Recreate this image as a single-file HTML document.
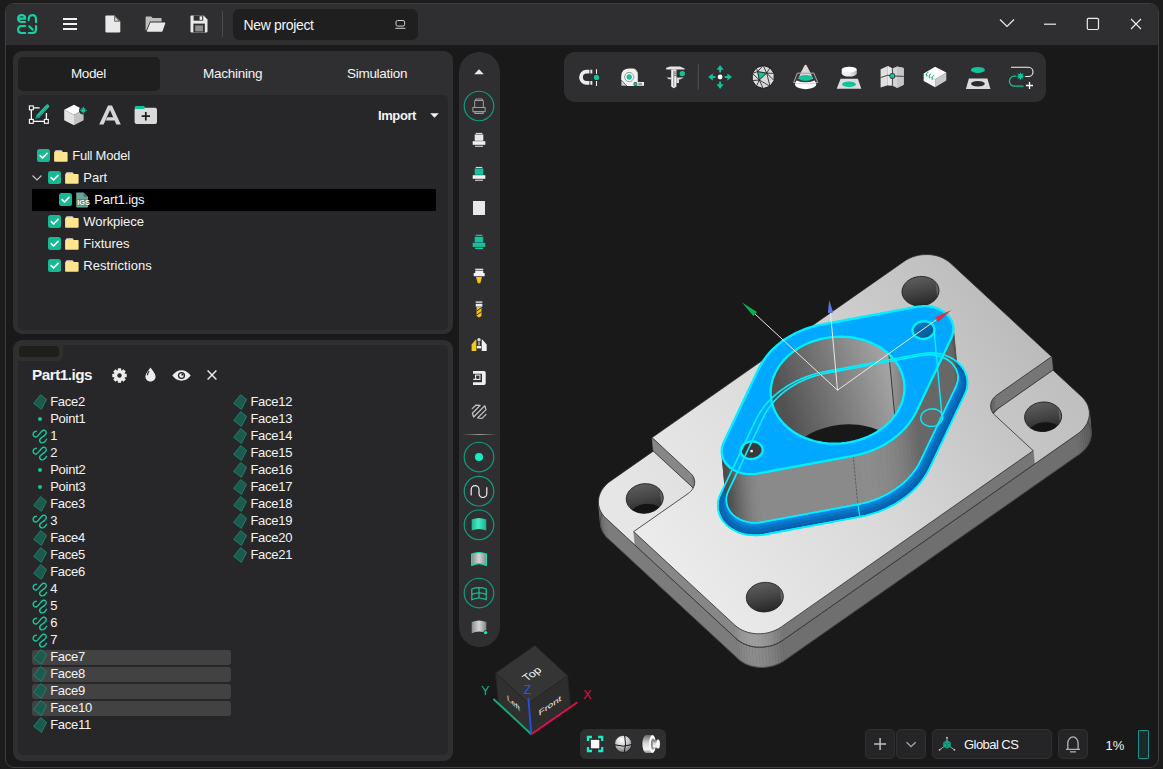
<!DOCTYPE html>
<html><head><meta charset="utf-8"><title>New project</title>
<style>
*{box-sizing:border-box;margin:0;padding:0}
html,body{width:1163px;height:769px;overflow:hidden;background:#1c1c1c;font-family:"Liberation Sans",sans-serif;color:#f2f2f2}
.abs{position:absolute}
#win{position:absolute;left:5px;top:3px;width:1154px;height:765px;border:1px solid #3e3e3e;border-radius:9px;background:#191919;overflow:hidden}
#title{position:absolute;left:0;top:0;width:1152px;height:41px;background:#2f2f31}
/* everything inside #root is positioned in page coordinates */
#root{position:absolute;left:0;top:0;width:1163px;height:769px}
.panel{position:absolute;background:#2f2f31;border-radius:9px}
.inner{position:absolute;background:#272729;border-radius:5px}
.t{position:absolute;white-space:nowrap;line-height:16px;height:16px;color:#f4f4f4}
.cb{position:absolute;width:13px;height:13px;border-radius:2.5px;background:#18b894}
.cb svg{position:absolute;left:0;top:0}
.fold{position:absolute;width:14px;height:12px}
.tb{position:absolute;background:#2f2f31}
svg{overflow:visible}
.li{position:absolute;font-size:13px;letter-spacing:-0.27px;line-height:16px;white-space:nowrap;color:#f4f4f4}
.hl{position:absolute;left:32px;width:199px;height:15px;border-radius:3px;background:#424243}
.btn{position:absolute;background:#252527;border:1px solid #303032;border-radius:5px}
</style></head><body>
<div id="win"><div id="title"></div></div>
<div id="root">
<!-- TITLEBAR -->
<!-- logo -->
<svg class="abs" style="left:17px;top:14px" width="20" height="20" viewBox="0 0 20 20" fill="none" stroke="#15d1a4" stroke-width="2.1" stroke-linecap="round" stroke-linejoin="round">
<path d="M1.2 4.6H8.2C8.2 2.5 6.8 1.1 4.7 1.1S1.1 2.5 1.1 4.6S2.5 8 4.7 8H8"/>
<path d="M11.6 6.3C11.6 2.9 12.6 1.1 15.3 1.1S19 2.9 19 5.2V8.2"/>
<path d="M8.2 12H4.7C2.5 12 1.1 13.4 1.1 15.5S2.5 19 4.7 19H8.2"/>
<path d="M19 12V15.5C19 17.6 17.6 19 15.5 19H11.8"/>
<path d="M12.2 12.4L15.8 15.6"/>
</svg>
<!-- hamburger -->
<div class="abs" style="left:63px;top:18px;width:14px;height:2px;background:#f2f2f2"></div>
<div class="abs" style="left:63px;top:23px;width:14px;height:2px;background:#f2f2f2"></div>
<div class="abs" style="left:63px;top:28px;width:14px;height:2px;background:#f2f2f2"></div>
<!-- new file -->
<svg class="abs" style="left:105px;top:15px" width="16" height="18" viewBox="0 0 16 18">
<path d="M1.2 0.5H9.5L15.3 6.3V16.6Q15.3 17.4 14.5 17.4H1.2Q0.4 17.4 0.4 16.6V1.3Q0.4 0.5 1.2 0.5Z" fill="#e9e9e9"/>
<path d="M9.4 0.5V6.4H15.3Z" fill="#2f2f31"/>
<path d="M10.1 2V5.7H13.8Z" fill="#dedede"/>
</svg>
<!-- open folder -->
<svg class="abs" style="left:145px;top:16px" width="21" height="16" viewBox="0 0 21 16">
<path d="M1.4 0.4H6.2L7.6 2H15.8Q16.6 2 16.6 2.8V5.5H5L1.2 14.5H0.6V1.2Q0.6 0.4 1.4 0.4Z" fill="#bdbdbd"/>
<path d="M5.4 6.4H19.8Q20.6 6.4 20.3 7.2L17.6 15Q17.4 15.7 16.6 15.7H2.4Q1.6 15.7 1.9 15Z" fill="#e9e9e9"/>
</svg>
<!-- save -->
<svg class="abs" style="left:190px;top:15px" width="18" height="18" viewBox="0 0 18 18">
<path d="M1.3 0.5H13.6L17.5 4.4V16.6Q17.5 17.4 16.7 17.4H1.3Q0.5 17.4 0.5 16.6V1.3Q0.5 0.5 1.3 0.5Z" fill="#e9e9e9"/>
<rect x="3.6" y="0.5" width="9.6" height="5.2" fill="#2f2f31"/>
<rect x="9.6" y="1.3" width="2.6" height="3.6" fill="#e9e9e9"/>
<rect x="3.4" y="8.6" width="11.4" height="8.8" fill="#2f2f31"/>
<rect x="5.2" y="10.4" width="7.8" height="6" fill="#8e8e8e"/>
</svg>
<div class="abs" style="left:222px;top:11px;width:1px;height:26px;background:#4c4c4e"></div>
<div class="abs" style="left:233px;top:9px;width:185px;height:31px;background:#1f1f1f;border-radius:6px"></div>
<div class="t" id="tproj" style="left:243.5px;top:17px;font-size:14px;letter-spacing:-0.35px">New project</div>
<svg class="abs" style="left:395px;top:20px" width="11" height="10" viewBox="0 0 11 10" fill="none" stroke="#d0d0d0" stroke-width="1">
<rect x="1" y="0.5" width="8.6" height="5.6" rx="1.6"/><path d="M0.3 8.3H10.4"/>
</svg>
<!-- window controls -->
<svg class="abs" style="left:990px;top:10px" width="165" height="28" viewBox="0 0 165 28" fill="none" stroke="#ececec" stroke-width="1.2">
<path d="M10 9.5L17 16.5L24 9.5"/>
<path d="M54 14.2H66"/>
<rect x="97.300" y="8.3" width="11.200" height="11.200" rx="1.2"/>
<path d="M141 9L151 19M151 9L141 19"/>
</svg>

<!-- LEFT PANELS -->
<div class="panel" style="left:13px;top:51px;width:440px;height:283px"></div>
<div class="abs" style="left:18px;top:57px;width:142px;height:34px;background:#1f1f1f;border-radius:5px"></div>
<div class="inner" style="left:18px;top:95px;width:430px;height:235px"></div>
<div class="t" id="tab1" style="left:71px;top:65.500px;font-size:13.5px;letter-spacing:-0.4px">Model</div>
<div class="t" id="tab2" style="left:203px;top:65.500px;font-size:13.5px;letter-spacing:-0.25px">Machining</div>
<div class="t" id="tab3" style="left:347px;top:65.500px;font-size:13.5px;letter-spacing:-0.29px">Simulation</div>
<svg class="abs" style="left:28px;top:104px" width="22" height="22" viewBox="0 0 22 22">
<path d="M3.350 3.900H11.600M3.350 3.900V17.400H18.400V9" fill="none" stroke="#fff" stroke-width="1.300"/>
<rect x="1.400" y="1.900" width="3.900" height="3.900" fill="#222" stroke="#fff" stroke-width="1.100"/>
<rect x="1.400" y="15.400" width="3.900" height="3.900" fill="#222" stroke="#fff" stroke-width="1.100"/>
<rect x="16.400" y="15.400" width="3.900" height="3.900" fill="#222" stroke="#fff" stroke-width="1.100"/>
<path d="M19.400 2.300L10.200 12" stroke="#13c39b" stroke-width="3.700" stroke-linecap="round" fill="none"/>
<path d="M8.600 10.400L11.900 13.500L7.300 15.100Z" fill="#0c9c7c"/>
<path d="M19 4L10.600 12.800" stroke="#0a8f72" stroke-width="0.900" fill="none"/>
</svg>
<svg class="abs" style="left:63px;top:104px" width="24" height="22" viewBox="0 0 24 22">
<path d="M11 0.700L20.600 5.800L11 10.800L1.200 5.800Z" fill="#fdfdfd"/>
<path d="M1.200 5.800L11 10.800V21.300L1.200 16.200Z" fill="#e2e2e2"/>
<path d="M20.600 5.800L11 10.800V21.300L20.600 16.200Z" fill="#c2c2c2"/>
<circle cx="20.300" cy="6.300" r="4.300" fill="#272729"/>
<path d="M20.300 2.800V9.800M16.800 6.300H23.800M18.400 4.400L22.200 8.200M22.200 4.400L18.400 8.200" stroke="#13c39b" stroke-width="1.100" fill="none"/>
</svg>
<svg class="abs" style="left:99px;top:105px" width="22" height="20" viewBox="0 0 22 20">
<path d="M9 0.600H13L21.800 19.400H17.300L15.600 15.600H6.800L8.300 12.300H14.200L11 5L4.600 19.400H0.200Z" fill="#d6d6d6"/>
</svg>
<svg class="abs" style="left:134px;top:105px" width="24" height="20" viewBox="0 0 24 20">
<rect x="0.600" y="2.700" width="22.400" height="16.400" rx="2" fill="#dadada"/>
<rect x="0.600" y="0.900" width="10.400" height="3.200" rx="1.600" fill="#13c39b"/>
<path d="M11.800 7V15.400M7.600 11.200H16" stroke="#1c1c1c" stroke-width="1.700" fill="none"/>
</svg>
<div class="t" id="timport" style="left:378px;top:107.500px;font-size:13px;font-weight:bold;letter-spacing:-0.4px">Import</div>
<svg class="abs" style="left:430px;top:113px" width="9" height="5" viewBox="0 0 9 5"><path d="M0.200 0.200H8.800L4.500 4.800Z" fill="#f2f2f2"/></svg>
<div class="abs" style="left:32px;top:189px;width:404px;height:22px;background:#000"></div>
<div class="cb" style="left:37px;top:149px"><svg width="13" height="13" viewBox="0 0 13 13"><path d="M3.200 6.600L5.600 9L10 4.400" fill="none" stroke="#fff" stroke-width="1.700" stroke-linecap="round" stroke-linejoin="round"/></svg></div>
<svg class="abs" style="left:54.3px;top:149.5px" width="14" height="12" viewBox="0 0 14 12"><rect x="0.600" y="0.200" width="8" height="3.400" rx="1.500" fill="#d9d9d9"/><path d="M0.900 2H6.800L8.200 2.100H12.800Q13.600 2.100 13.600 2.900V11Q13.600 11.800 12.800 11.800H0.900Q0.100 11.800 0.100 11V2.800Q0.100 2 0.900 2Z" fill="#fde58e"/></svg>
<div class="t tr" id="tr0" style="left:72.3px;top:147.5px;font-size:13px;letter-spacing:-0.25px">Full Model</div>
<div class="cb" style="left:48px;top:171px"><svg width="13" height="13" viewBox="0 0 13 13"><path d="M3.200 6.600L5.600 9L10 4.400" fill="none" stroke="#fff" stroke-width="1.700" stroke-linecap="round" stroke-linejoin="round"/></svg></div>
<svg class="abs" style="left:65.3px;top:171.5px" width="14" height="12" viewBox="0 0 14 12"><rect x="0.600" y="0.200" width="8" height="3.400" rx="1.500" fill="#d9d9d9"/><path d="M0.900 2H6.800L8.200 2.100H12.800Q13.600 2.100 13.600 2.900V11Q13.600 11.800 12.800 11.800H0.900Q0.100 11.800 0.100 11V2.800Q0.100 2 0.900 2Z" fill="#fde58e"/></svg>
<div class="t tr" id="tr1" style="left:83.3px;top:169.5px;font-size:13px">Part</div>
<div class="cb" style="left:59px;top:193px"><svg width="13" height="13" viewBox="0 0 13 13"><path d="M3.200 6.600L5.600 9L10 4.400" fill="none" stroke="#fff" stroke-width="1.700" stroke-linecap="round" stroke-linejoin="round"/></svg></div>
<svg class="abs" style="left:76px;top:192.2px" width="15" height="16" viewBox="0 0 15 16"><path d="M1 0.400H7.600L12 4.800V14.800Q12 15.600 11.200 15.600H1Q0.200 15.600 0.200 14.800V1.200Q0.200 0.400 1 0.400Z" fill="#6aa596"/><path d="M7.600 0.400V4.800H12Z" fill="#3f7567"/><rect x="0.200" y="7" width="11.800" height="6.800" fill="#3d6f62" opacity="0.550"/><text x="1.200" y="13.300" font-family="Liberation Sans,sans-serif" font-size="7.800" font-weight="bold" fill="#fff" textLength="12.600" lengthAdjust="spacingAndGlyphs">IGS</text></svg>
<div class="t tr" id="tr2" style="left:94.3px;top:191.5px;font-size:13px;letter-spacing:-0.13px">Part1.igs</div>
<div class="cb" style="left:48px;top:215px"><svg width="13" height="13" viewBox="0 0 13 13"><path d="M3.200 6.600L5.600 9L10 4.400" fill="none" stroke="#fff" stroke-width="1.700" stroke-linecap="round" stroke-linejoin="round"/></svg></div>
<svg class="abs" style="left:65.3px;top:215.5px" width="14" height="12" viewBox="0 0 14 12"><rect x="0.600" y="0.200" width="8" height="3.400" rx="1.500" fill="#d9d9d9"/><path d="M0.900 2H6.800L8.200 2.100H12.800Q13.600 2.100 13.600 2.900V11Q13.600 11.800 12.800 11.800H0.900Q0.100 11.800 0.100 11V2.800Q0.100 2 0.900 2Z" fill="#fde58e"/></svg>
<div class="t tr" id="tr3" style="left:83.3px;top:213.5px;font-size:13px;letter-spacing:-0.07px">Workpiece</div>
<div class="cb" style="left:48px;top:237px"><svg width="13" height="13" viewBox="0 0 13 13"><path d="M3.200 6.600L5.600 9L10 4.400" fill="none" stroke="#fff" stroke-width="1.700" stroke-linecap="round" stroke-linejoin="round"/></svg></div>
<svg class="abs" style="left:65.3px;top:237.5px" width="14" height="12" viewBox="0 0 14 12"><rect x="0.600" y="0.200" width="8" height="3.400" rx="1.500" fill="#d9d9d9"/><path d="M0.900 2H6.800L8.200 2.100H12.800Q13.600 2.100 13.600 2.900V11Q13.600 11.800 12.800 11.800H0.900Q0.100 11.800 0.100 11V2.800Q0.100 2 0.900 2Z" fill="#fde58e"/></svg>
<div class="t tr" id="tr4" style="left:83.3px;top:235.5px;font-size:13px">Fixtures</div>
<div class="cb" style="left:48px;top:259px"><svg width="13" height="13" viewBox="0 0 13 13"><path d="M3.200 6.600L5.600 9L10 4.400" fill="none" stroke="#fff" stroke-width="1.700" stroke-linecap="round" stroke-linejoin="round"/></svg></div>
<svg class="abs" style="left:65.3px;top:259.5px" width="14" height="12" viewBox="0 0 14 12"><rect x="0.600" y="0.200" width="8" height="3.400" rx="1.500" fill="#d9d9d9"/><path d="M0.900 2H6.800L8.200 2.100H12.800Q13.600 2.100 13.600 2.900V11Q13.600 11.800 12.800 11.800H0.900Q0.100 11.800 0.100 11V2.800Q0.100 2 0.900 2Z" fill="#fde58e"/></svg>
<div class="t tr" id="tr5" style="left:83.3px;top:257.5px;font-size:13px;letter-spacing:0.05px">Restrictions</div>
<svg class="abs" style="left:32px;top:175px" width="10" height="6" viewBox="0 0 10 6"><path d="M0.500 0.500L5 5L9.500 0.500" fill="none" stroke="#c4c4c4" stroke-width="1.200"/></svg>
<div class="panel" style="left:13px;top:340px;width:440px;height:421px"></div>
<div class="inner" style="left:18px;top:345px;width:430px;height:410px"></div>
<div class="abs" style="left:18px;top:345px;width:45px;height:16px;background:#2f2f31;border-radius:4px 0 5px 0"></div>
<div class="abs" style="left:19px;top:346px;width:40px;height:10.800px;background:#1e1e1a;border-radius:3.500px"></div>
<div class="t" id="thead" style="left:32px;top:367px;font-size:15.3px;font-weight:bold;letter-spacing:-0.5px">Part1.igs</div>
<svg class="abs" style="left:111.700px;top:367.700px" width="15" height="15" viewBox="-7.500 -7.500 15 15"><g fill="#ededed"><circle r="5.500"/><rect x="-1.700" y="-7.200" width="3.400" height="3.400" rx="0.400" transform="rotate(0)"/><rect x="-1.700" y="-7.200" width="3.400" height="3.400" rx="0.400" transform="rotate(45)"/><rect x="-1.700" y="-7.200" width="3.400" height="3.400" rx="0.400" transform="rotate(90)"/><rect x="-1.700" y="-7.200" width="3.400" height="3.400" rx="0.400" transform="rotate(135)"/><rect x="-1.700" y="-7.200" width="3.400" height="3.400" rx="0.400" transform="rotate(180)"/><rect x="-1.700" y="-7.200" width="3.400" height="3.400" rx="0.400" transform="rotate(225)"/><rect x="-1.700" y="-7.200" width="3.400" height="3.400" rx="0.400" transform="rotate(270)"/><rect x="-1.700" y="-7.200" width="3.400" height="3.400" rx="0.400" transform="rotate(315)"/></g><circle r="2.200" fill="#272729"/></svg>
<svg class="abs" style="left:145px;top:367.300px" width="11" height="15" viewBox="0 0 11 15"><path d="M5.500 0.400C7.400 3.400 10.600 6.400 10.600 9.400C10.600 12.200 8.400 14.400 5.500 14.400S0.400 12.200 0.400 9.400C0.400 6.400 3.600 3.400 5.500 0.400Z" fill="#ededed"/><path d="M2.400 8.200Q2.700 5.800 4.100 4" stroke="#272729" stroke-width="1.200" fill="none"/></svg>
<svg class="abs" style="left:171.800px;top:369.500px" width="19" height="11" viewBox="0 0 19 11"><path d="M0.300 5.500Q4.400 0.300 9.500 0.300T18.700 5.500Q14.600 10.700 9.500 10.700T0.300 5.500Z" fill="#ededed"/><circle cx="9.500" cy="5.500" r="3.600" fill="#272729"/><circle cx="9.500" cy="5.500" r="2.300" fill="#ededed"/><path d="M9.500 5.500V3.300A2.200 2.200 0 0 1 11.700 5.500Z" fill="#272729"/></svg>
<svg class="abs" style="left:207px;top:370px" width="10" height="10" viewBox="0 0 10 10"><path d="M0.600 0.600L9.400 9.400M9.400 0.600L0.600 9.400" stroke="#ededed" stroke-width="1.400"/></svg>
<div class="hl" style="top:650px"></div>
<div class="hl" style="top:667px"></div>
<div class="hl" style="top:684px"></div>
<div class="hl" style="top:701px"></div>
<svg class="abs" style="left:33.2px;top:393.5px" width="14" height="16" viewBox="0 0 14 16"><path d="M7.600 0.600L13.600 5.400L8.400 15.400L0.600 9.400Z" fill="#1d5a4e" stroke="#1f8a72" stroke-width="0.800"/></svg>
<div class="li c1" style="left:50.2px;top:393.5px">Face2</div>
<div class="abs" style="left:37.8px;top:416.5px;width:4px;height:4px;border-radius:2px;background:#13c39b"></div>
<div class="li c1" style="left:50.2px;top:410.5px">Point1</div>
<svg class="abs" style="left:32px;top:427.5px" width="15" height="16" viewBox="0 0 15 16"><path d="M4.3 3.200C2 3.400 0.800 5.200 1.200 6.800C1.600 8.600 3.200 9.400 4.600 8.800C7 7.800 8.600 3 11.200 2.300C13 1.900 14.400 3 14.200 4.800C14 6.800 12 8 9.800 9.400C8 10.600 7.200 12 7.800 13.400C8.400 14.800 10 15.200 11.400 14.600C13 13.900 14 12.600 14.600 11.300" fill="none" stroke="#13c99f" stroke-width="1.400" stroke-linecap="round"/></svg>
<div class="li c1" style="left:50.2px;top:427.5px">1</div>
<svg class="abs" style="left:32px;top:444.5px" width="15" height="16" viewBox="0 0 15 16"><path d="M4.3 3.200C2 3.400 0.800 5.200 1.200 6.800C1.600 8.600 3.200 9.400 4.600 8.800C7 7.800 8.600 3 11.200 2.300C13 1.900 14.400 3 14.200 4.800C14 6.800 12 8 9.800 9.400C8 10.600 7.200 12 7.800 13.400C8.400 14.800 10 15.200 11.400 14.600C13 13.900 14 12.600 14.600 11.300" fill="none" stroke="#13c99f" stroke-width="1.400" stroke-linecap="round"/></svg>
<div class="li c1" style="left:50.2px;top:444.5px">2</div>
<div class="abs" style="left:37.8px;top:467.5px;width:4px;height:4px;border-radius:2px;background:#13c39b"></div>
<div class="li c1" style="left:50.2px;top:461.5px">Point2</div>
<div class="abs" style="left:37.8px;top:484.5px;width:4px;height:4px;border-radius:2px;background:#13c39b"></div>
<div class="li c1" style="left:50.2px;top:478.5px">Point3</div>
<svg class="abs" style="left:33.2px;top:495.5px" width="14" height="16" viewBox="0 0 14 16"><path d="M7.600 0.600L13.600 5.400L8.400 15.400L0.600 9.400Z" fill="#1d5a4e" stroke="#1f8a72" stroke-width="0.800"/></svg>
<div class="li c1" style="left:50.2px;top:495.5px">Face3</div>
<svg class="abs" style="left:32px;top:512.5px" width="15" height="16" viewBox="0 0 15 16"><path d="M4.3 3.200C2 3.400 0.800 5.200 1.200 6.800C1.600 8.600 3.200 9.400 4.600 8.800C7 7.800 8.600 3 11.200 2.300C13 1.900 14.400 3 14.200 4.800C14 6.800 12 8 9.800 9.400C8 10.600 7.200 12 7.800 13.400C8.400 14.800 10 15.200 11.400 14.600C13 13.900 14 12.600 14.600 11.300" fill="none" stroke="#13c99f" stroke-width="1.400" stroke-linecap="round"/></svg>
<div class="li c1" style="left:50.2px;top:512.5px">3</div>
<svg class="abs" style="left:33.2px;top:529.5px" width="14" height="16" viewBox="0 0 14 16"><path d="M7.600 0.600L13.600 5.400L8.400 15.400L0.600 9.400Z" fill="#1d5a4e" stroke="#1f8a72" stroke-width="0.800"/></svg>
<div class="li c1" style="left:50.2px;top:529.5px">Face4</div>
<svg class="abs" style="left:33.2px;top:546.5px" width="14" height="16" viewBox="0 0 14 16"><path d="M7.600 0.600L13.600 5.400L8.400 15.400L0.600 9.400Z" fill="#1d5a4e" stroke="#1f8a72" stroke-width="0.800"/></svg>
<div class="li c1" style="left:50.2px;top:546.5px">Face5</div>
<svg class="abs" style="left:33.2px;top:563.5px" width="14" height="16" viewBox="0 0 14 16"><path d="M7.600 0.600L13.600 5.400L8.400 15.400L0.600 9.400Z" fill="#1d5a4e" stroke="#1f8a72" stroke-width="0.800"/></svg>
<div class="li c1" style="left:50.2px;top:563.5px">Face6</div>
<svg class="abs" style="left:32px;top:580.5px" width="15" height="16" viewBox="0 0 15 16"><path d="M4.3 3.200C2 3.400 0.800 5.200 1.200 6.800C1.600 8.600 3.200 9.400 4.600 8.800C7 7.800 8.600 3 11.200 2.300C13 1.900 14.400 3 14.200 4.800C14 6.800 12 8 9.800 9.400C8 10.600 7.200 12 7.800 13.400C8.400 14.800 10 15.200 11.400 14.600C13 13.900 14 12.600 14.600 11.300" fill="none" stroke="#13c99f" stroke-width="1.400" stroke-linecap="round"/></svg>
<div class="li c1" style="left:50.2px;top:580.5px">4</div>
<svg class="abs" style="left:32px;top:597.5px" width="15" height="16" viewBox="0 0 15 16"><path d="M4.3 3.200C2 3.400 0.800 5.200 1.200 6.800C1.600 8.600 3.200 9.400 4.600 8.800C7 7.800 8.600 3 11.200 2.300C13 1.900 14.400 3 14.200 4.800C14 6.800 12 8 9.800 9.400C8 10.600 7.200 12 7.800 13.400C8.400 14.800 10 15.200 11.400 14.600C13 13.900 14 12.600 14.600 11.300" fill="none" stroke="#13c99f" stroke-width="1.400" stroke-linecap="round"/></svg>
<div class="li c1" style="left:50.2px;top:597.5px">5</div>
<svg class="abs" style="left:32px;top:614.5px" width="15" height="16" viewBox="0 0 15 16"><path d="M4.3 3.200C2 3.400 0.800 5.200 1.200 6.800C1.600 8.600 3.200 9.400 4.600 8.800C7 7.800 8.600 3 11.200 2.300C13 1.900 14.400 3 14.200 4.800C14 6.800 12 8 9.800 9.400C8 10.600 7.200 12 7.800 13.400C8.400 14.800 10 15.200 11.400 14.600C13 13.900 14 12.600 14.600 11.300" fill="none" stroke="#13c99f" stroke-width="1.400" stroke-linecap="round"/></svg>
<div class="li c1" style="left:50.2px;top:614.5px">6</div>
<svg class="abs" style="left:32px;top:631.5px" width="15" height="16" viewBox="0 0 15 16"><path d="M4.3 3.200C2 3.400 0.800 5.200 1.200 6.800C1.600 8.600 3.200 9.400 4.600 8.800C7 7.800 8.600 3 11.200 2.300C13 1.900 14.400 3 14.200 4.800C14 6.800 12 8 9.800 9.400C8 10.600 7.200 12 7.800 13.400C8.400 14.800 10 15.200 11.400 14.600C13 13.900 14 12.600 14.600 11.300" fill="none" stroke="#13c99f" stroke-width="1.400" stroke-linecap="round"/></svg>
<div class="li c1" style="left:50.2px;top:631.5px">7</div>
<svg class="abs" style="left:33.2px;top:648.5px" width="14" height="16" viewBox="0 0 14 16"><path d="M7.600 0.600L13.600 5.400L8.400 15.400L0.600 9.400Z" fill="#1d5a4e" stroke="#1f8a72" stroke-width="0.800"/></svg>
<div class="li c1" style="left:50.2px;top:648.5px">Face7</div>
<svg class="abs" style="left:33.2px;top:665.5px" width="14" height="16" viewBox="0 0 14 16"><path d="M7.600 0.600L13.600 5.400L8.400 15.400L0.600 9.400Z" fill="#1d5a4e" stroke="#1f8a72" stroke-width="0.800"/></svg>
<div class="li c1" style="left:50.2px;top:665.5px">Face8</div>
<svg class="abs" style="left:33.2px;top:682.5px" width="14" height="16" viewBox="0 0 14 16"><path d="M7.600 0.600L13.600 5.400L8.400 15.400L0.600 9.400Z" fill="#1d5a4e" stroke="#1f8a72" stroke-width="0.800"/></svg>
<div class="li c1" style="left:50.2px;top:682.5px">Face9</div>
<svg class="abs" style="left:33.2px;top:699.5px" width="14" height="16" viewBox="0 0 14 16"><path d="M7.600 0.600L13.600 5.400L8.400 15.400L0.600 9.400Z" fill="#1d5a4e" stroke="#1f8a72" stroke-width="0.800"/></svg>
<div class="li c1" style="left:50.2px;top:699.5px">Face10</div>
<svg class="abs" style="left:33.2px;top:716.5px" width="14" height="16" viewBox="0 0 14 16"><path d="M7.600 0.600L13.600 5.400L8.400 15.400L0.600 9.400Z" fill="#1d5a4e" stroke="#1f8a72" stroke-width="0.800"/></svg>
<div class="li c1" style="left:50.2px;top:716.5px">Face11</div>
<svg class="abs" style="left:233.4px;top:393.5px" width="14" height="16" viewBox="0 0 14 16"><path d="M7.600 0.600L13.600 5.400L8.400 15.400L0.600 9.400Z" fill="#1d5a4e" stroke="#1f8a72" stroke-width="0.800"/></svg>
<div class="li c2" style="left:250.4px;top:393.5px">Face12</div>
<svg class="abs" style="left:233.4px;top:410.5px" width="14" height="16" viewBox="0 0 14 16"><path d="M7.600 0.600L13.600 5.400L8.400 15.400L0.600 9.400Z" fill="#1d5a4e" stroke="#1f8a72" stroke-width="0.800"/></svg>
<div class="li c2" style="left:250.4px;top:410.5px">Face13</div>
<svg class="abs" style="left:233.4px;top:427.5px" width="14" height="16" viewBox="0 0 14 16"><path d="M7.600 0.600L13.600 5.400L8.400 15.400L0.600 9.400Z" fill="#1d5a4e" stroke="#1f8a72" stroke-width="0.800"/></svg>
<div class="li c2" style="left:250.4px;top:427.5px">Face14</div>
<svg class="abs" style="left:233.4px;top:444.5px" width="14" height="16" viewBox="0 0 14 16"><path d="M7.600 0.600L13.600 5.400L8.400 15.400L0.600 9.400Z" fill="#1d5a4e" stroke="#1f8a72" stroke-width="0.800"/></svg>
<div class="li c2" style="left:250.4px;top:444.5px">Face15</div>
<svg class="abs" style="left:233.4px;top:461.5px" width="14" height="16" viewBox="0 0 14 16"><path d="M7.600 0.600L13.600 5.400L8.400 15.400L0.600 9.400Z" fill="#1d5a4e" stroke="#1f8a72" stroke-width="0.800"/></svg>
<div class="li c2" style="left:250.4px;top:461.5px">Face16</div>
<svg class="abs" style="left:233.4px;top:478.5px" width="14" height="16" viewBox="0 0 14 16"><path d="M7.600 0.600L13.600 5.400L8.400 15.400L0.600 9.400Z" fill="#1d5a4e" stroke="#1f8a72" stroke-width="0.800"/></svg>
<div class="li c2" style="left:250.4px;top:478.5px">Face17</div>
<svg class="abs" style="left:233.4px;top:495.5px" width="14" height="16" viewBox="0 0 14 16"><path d="M7.600 0.600L13.600 5.400L8.400 15.400L0.600 9.400Z" fill="#1d5a4e" stroke="#1f8a72" stroke-width="0.800"/></svg>
<div class="li c2" style="left:250.4px;top:495.5px">Face18</div>
<svg class="abs" style="left:233.4px;top:512.5px" width="14" height="16" viewBox="0 0 14 16"><path d="M7.600 0.600L13.600 5.400L8.400 15.400L0.600 9.400Z" fill="#1d5a4e" stroke="#1f8a72" stroke-width="0.800"/></svg>
<div class="li c2" style="left:250.4px;top:512.5px">Face19</div>
<svg class="abs" style="left:233.4px;top:529.5px" width="14" height="16" viewBox="0 0 14 16"><path d="M7.600 0.600L13.600 5.400L8.400 15.400L0.600 9.400Z" fill="#1d5a4e" stroke="#1f8a72" stroke-width="0.800"/></svg>
<div class="li c2" style="left:250.4px;top:529.5px">Face20</div>
<svg class="abs" style="left:233.4px;top:546.5px" width="14" height="16" viewBox="0 0 14 16"><path d="M7.600 0.600L13.600 5.400L8.400 15.400L0.600 9.400Z" fill="#1d5a4e" stroke="#1f8a72" stroke-width="0.800"/></svg>
<div class="li c2" style="left:250.4px;top:546.5px">Face21</div>
<!-- TOOLBARS -->
<div class="tb" style="left:459px;top:52px;width:40.500px;height:594.500px;border-radius:20.250px"></div>
<div class="tb" style="left:563.500px;top:51.500px;width:482.500px;height:50.500px;border-radius:11px"></div>
<div class="tb" style="left:580px;top:729px;width:86px;height:30px;border-radius:6px"></div>
<svg class="abs" style="left:459px;top:52px" width="41" height="595" viewBox="459 52 41 595">
<path d="M474.200 74.200L479 69.200L483.800 74.200Z" fill="#e8e8e8"/>
<circle cx="479" cy="106" r="14.800" fill="none" stroke="#0e9f80" stroke-width="1.150"/>
<g fill="none" stroke="#a0a0a0" stroke-width="1"><path d="M475.700 99H482.300V100.500H475.700Z"/><path d="M474.700 100.500H483.300V107.500H474.700Z"/><rect x="472.900" y="107.500" width="12.200" height="4.200"/><rect x="474.900" y="111.700" width="8.200" height="1.800"/></g>
<rect x="475.700" y="132.9" width="6.600" height="1.100" fill="#d8d8d8"/>
<rect x="474.700" y="134.5" width="8.600" height="6.300" fill="#e8e8e8"/>
<rect x="472.700" y="141.2" width="12.600" height="3.600" fill="#f0f0f0"/>
<rect x="475" y="145.7" width="8" height="1.100" fill="#d8d8d8"/>
<rect x="475.700" y="166.9" width="6.600" height="1.100" fill="#d8d8d8"/>
<rect x="474.700" y="168.5" width="8.600" height="6.300" fill="#13c39b"/>
<rect x="472.700" y="175.2" width="12.600" height="3.600" fill="#f0f0f0"/>
<rect x="475" y="179.7" width="8" height="1.100" fill="#d8d8d8"/>
<rect x="473" y="201" width="12" height="14" fill="#e8e8e8"/>
<rect x="475.700" y="234.700" width="6.600" height="1.300" fill="#13c39b"/>
<rect x="474.700" y="236.800" width="8.600" height="5.700" fill="#13c39b"/>
<rect x="472.700" y="242.900" width="12.600" height="4" fill="#13c39b"/>
<rect x="475" y="247.700" width="8" height="1.400" fill="#13c39b"/>
<rect x="475.200" y="268.700" width="8" height="1.400" fill="#e0e0e0"/>
<rect x="475.200" y="270.700" width="8" height="2.400" fill="#f2f2f2"/>
<rect x="473.700" y="273" width="11" height="3.200" rx="0.600" fill="#f2f2f2"/>
<path d="M476 277H482L480.300 283.200H477.800Z" fill="#f5c518"/>
<rect x="475.700" y="301.400" width="6.700" height="1.400" fill="#e0e0e0"/>
<rect x="475.700" y="303.800" width="6.700" height="2.800" fill="#f2f2f2"/>
<path d="M476.600 307H481.500V316L479 317.500L476.600 316Z" fill="#f5c518"/>
<path d="M476.600 311L481.500 307.600M476.600 315L481.500 311.600" stroke="#2f2f31" stroke-width="1" fill="none"/>
<path d="M471.600 351V344.500L475.500 339.800H476.300V351Z" fill="#f5c518"/>
<path d="M481.700 339.800H482.500L486.700 344.500V351H481.700Z" fill="#f0f0f0"/>
<circle cx="479" cy="339.800" r="1.700" fill="#dcdcdc"/>
<rect x="476.800" y="346" width="4.300" height="2.400" fill="#f0f0f0"/>
<rect x="478.300" y="342" width="1.400" height="3.500" fill="#bdbdbd"/>
<path d="M473 371H484Q485.700 371 485.700 372.700V383.300Q485.700 385 484 385H473V382.200H482V373.800H473Z" fill="#f0f0f0"/>
<path d="M475 374.400H480.500V380H473.200V378.800H475Z" fill="#e2e2e2"/>
<rect x="476.200" y="375.600" width="3.200" height="3.200" fill="#2f2f31"/>
<path d="M472.200 408.600L475.800 405.200L480.200 405.400L472.400 413.200L473.600 417L484.800 405.800L486 409.600L477.600 418L482 418.400L486 414.400" fill="none" stroke="#c2c2c2" stroke-width="1.250" stroke-linecap="round" stroke-linejoin="round"/>
<defs><linearGradient id="sepg" x1="0" x2="1"><stop offset="0" stop-color="#8f8f8f" stop-opacity="0"/><stop offset="0.5" stop-color="#9a9a9a"/><stop offset="1" stop-color="#8f8f8f" stop-opacity="0"/></linearGradient>
<linearGradient id="tealg" x1="0" x2="1"><stop offset="0" stop-color="#0fbf98"/><stop offset="0.45" stop-color="#4fe6c6"/><stop offset="1" stop-color="#0fb490"/></linearGradient>
<linearGradient id="grayg" x1="0" x2="1"><stop offset="0" stop-color="#8a8a8a"/><stop offset="0.5" stop-color="#d6d6d6"/><stop offset="1" stop-color="#858585"/></linearGradient></defs>
<rect x="461.500" y="434" width="36" height="1" fill="url(#sepg)"/>
<circle cx="479" cy="457" r="14.800" fill="none" stroke="#0e9f80" stroke-width="1.150"/>
<circle cx="479" cy="457" r="4" fill="#12f0c2"/>
<circle cx="479" cy="491.2" r="14.800" fill="none" stroke="#0e9f80" stroke-width="1.150"/>
<path d="M471.200 495.500V489.500A3.900 3.900 0 0 1 479 489.500V493.600A3.900 3.900 0 0 0 486.800 493.600V487.200" fill="none" stroke="#f0f0f0" stroke-width="1.200"/>
<circle cx="479" cy="524.8" r="14.800" fill="none" stroke="#0e9f80" stroke-width="1.150"/>
<path d="M471.700 519.4 Q479 516.4 486.300 519.4 V530.6 Q479 527.2 471.700 530.6 Z" fill="url(#tealg)"/>
<path d="M471.700 554.1 Q479 551.1 486.300 554.1 V565.3 Q479 561.9 471.700 565.3 Z" fill="url(#grayg)" stroke="#16e0b4" stroke-width="1.3" stroke-linejoin="round"/>
<circle cx="479" cy="593" r="14.800" fill="none" stroke="#0e9f80" stroke-width="1.150"/>
<g fill="none" stroke="#13c39b" stroke-width="1.200"><path d="M471.800 589 Q479 586.2 486.200 589 V599.6 Q479 596.4 471.800 599.6 Z"/><path d="M479 587.6 V598"/><path d="M471.800 594.4 Q479 591.4 486.200 594.4"/></g>
<path d="M471.700 622 Q479 619 486.300 622 V633.2 Q479 629.8 471.700 633.2 Z" fill="url(#grayg)"/>
<circle cx="485.600" cy="632.600" r="2.300" fill="#2f2f31"/><circle cx="485.600" cy="632.600" r="1.700" fill="#12e8bc"/>
</svg>
<!-- HTOOLS -->
<svg class="abs" style="left:563px;top:51px" width="484" height="52" viewBox="563 51 484 52">
<path d="M592.300 69.700H586.600A7.500 7.500 0 0 0 586.600 84.700H592.300V80.900H586.600A3.700 3.700 0 0 1 586.600 73.500H592.300Z" fill="#ececec"/>
<path d="M589.900 69.200V74M589.900 80.400V85.200" stroke="#1c1c1c" stroke-width="0.900"/>
<path d="M596.500 69.200V86" stroke="#f0f0f0" stroke-width="1.100"/>
<circle cx="596.500" cy="77.500" r="3.500" fill="#1c1c1c"/><circle cx="596.500" cy="77.500" r="2.800" fill="#13c39b"/>
<path d="M621.200 86V76.500Q621.200 68.500 629.400 68.500H633Q637.800 69 637.800 74.500V82H644V85.800H636.500L636 86Z" fill="#f2f2f2"/>
<path d="M621.200 80L627 86H621.200Z" fill="#cfcfcf" stroke="#2f2f31" stroke-width="0.600"/>
<circle cx="629.200" cy="77" r="4.600" fill="#f8f8f8" stroke="#8c8c8c" stroke-width="0.900"/><circle cx="629.200" cy="77" r="2.700" fill="#13c39b"/>
<rect x="638.400" y="82.800" width="3.600" height="2.200" fill="#9a9a9a"/>
<path d="M634.500 69.200L637 71.600" stroke="#8c8c8c" stroke-width="0.800"/>
<circle cx="635.400" cy="83.900" r="2" fill="#2f2f31"/><circle cx="635.400" cy="83.900" r="1.500" fill="#13c39b"/>
<path d="M666.200 67.800L670 66.400H680L684.600 68.400V69.400H666.200Z" fill="#e4e4e4"/>
<path d="M671.200 69.400H676.400V86.600L673.800 88.200L671.200 86.600Z" fill="#f2f2f2"/>
<path d="M666.600 77.600H671.200V79.200H668.600Z M676.400 77.400H684L680 79.400H679V83H676.400Z" fill="#d6d6d6"/>
<path d="M673.800 70.500V86.500" stroke="#6c6c6c" stroke-width="0.800"/>
<path d="M674.200 72H676M674.200 73.800H676M674.200 75.600H676" stroke="#2f2f31" stroke-width="0.700"/>
<circle cx="682.300" cy="73.600" r="3.300" fill="#2f2f31"/><circle cx="682.300" cy="73.600" r="2.700" fill="#13c39b"/>
<rect x="697.800" y="64.300" width="1" height="25.400" fill="#505052"/>
<g transform="rotate(0 720.1 77)"><path d="M720.1 72.4V69" stroke="#13c39b" stroke-width="1.900"/><path d="M720.1 65.1L723.6 69.7H716.6Z" fill="#13c39b"/></g>
<g transform="rotate(90 720.1 77)"><path d="M720.1 72.4V69" stroke="#13c39b" stroke-width="1.900"/><path d="M720.1 65.1L723.6 69.7H716.6Z" fill="#13c39b"/></g>
<g transform="rotate(180 720.1 77)"><path d="M720.1 72.4V69" stroke="#13c39b" stroke-width="1.900"/><path d="M720.1 65.1L723.6 69.7H716.6Z" fill="#13c39b"/></g>
<g transform="rotate(270 720.1 77)"><path d="M720.1 72.4V69" stroke="#13c39b" stroke-width="1.900"/><path d="M720.1 65.1L723.6 69.7H716.6Z" fill="#13c39b"/></g>
<circle cx="720.1" cy="77" r="2.400" fill="#fff"/>
<polygon points="763.2,65.5 770.0,67.7 774.1,73.4 774.1,80.6 770.0,86.3 763.2,88.5 756.4,86.3 752.3,80.6 752.3,73.4 756.4,67.7" fill="#dadada" stroke="#161616" stroke-width="0.900" stroke-linejoin="round"/>
<path d="M757.6 71.6L756.4 67.7M757.6 71.6L763.2 65.5M757.6 71.6L752.3 73.4M766.7 73.1L763.2 65.5M766.7 73.1L770.0 67.7M766.7 73.1L774.1 73.4M766.7 73.1L774.1 80.6M759.3 80.0L752.3 80.6M759.3 80.0L756.4 86.3M759.3 80.0L763.2 88.5M759.3 80.0L770.0 86.3M766.7 73.1L770.0 86.3M759.3 80.0L752.3 73.4" stroke="#161616" stroke-width="0.800" fill="none"/>
<polygon points="757.6,71.6 766.7,73.1 759.3,80.0" fill="#13c39b" stroke="#161616" stroke-width="0.900" stroke-linejoin="round"/>
<path d="M804.600 65.200Q805.600 64.200 806.600 65.200L811.300 74.200H799.900Z" fill="#d9d9d9"/>
<path d="M797.300 73.100H813.900L817.800 82.600H793.600Z" fill="#3a3a3c" stroke="#b5b5b5" stroke-width="0.900"/>
<path d="M800.400 73.600H810.800L813 79H798.400Z" fill="#d9d9d9"/>
<ellipse cx="805.600" cy="77.900" rx="7" ry="2.900" fill="#13c39b"/>
<path d="M796.600 80.400Q805.600 84.400 814.600 80.400L816 83.300H795.200Z" fill="#fff"/>
<path d="M795.200 83.300H816Q817.400 86 812.400 88Q805.600 90.300 798.800 88Q793.800 86 795.200 83.300Z" fill="#fff"/>
<defs><linearGradient id="cylg" x1="0" x2="1"><stop offset="0" stop-color="#f4f4f4"/><stop offset="0.55" stop-color="#ececec"/><stop offset="1" stop-color="#b8b8b8"/></linearGradient></defs>
<path d="M841.700 69.400V73.600A7.550 2.900 0 0 0 856.800 73.600V69.400Z" fill="url(#cylg)"/>
<ellipse cx="849.250" cy="69.600" rx="7.550" ry="2.800" fill="#fff"/>
<path d="M840.600 78.700H857.900L861.300 88.700H836.700Z" fill="#dcdcdc"/>
<ellipse cx="849" cy="84.300" rx="7" ry="2.800" fill="#13c39b"/>
<path d="M880.600 69.200L887.800 65.900V85.200L880.600 87.600Z" fill="#e0e0e0"/>
<path d="M887.800 65.900L892.400 68.400L897 66.400L903.700 68V84.800L897 88L892.400 85.600L887.800 85.200Z" fill="#d4d4d4"/>
<path d="M892.400 68.400V85.600L887.800 85.200V65.900Z" fill="#e8e8e8"/>
<path d="M897 66.400L903.700 68V84.800L897 88Z" fill="#c6c6c6"/>
<path d="M880.600 77.600L887.800 75.200L892.400 75.900L903.700 76.400M892.400 68.400V85.600" stroke="#2f2f31" stroke-width="0.900" fill="none"/>
<circle cx="892.300" cy="75.900" r="2.900" fill="#2f2f31"/><circle cx="892.300" cy="75.900" r="2.200" fill="#13c39b"/>
<path d="M923.700 73.400L935.100 66.800L946.300 72.600L935.100 79.500Z" fill="#ffffff"/>
<path d="M923.700 73.400L935.100 79.500V87.300L923.700 81Z" fill="#f6f6f6"/>
<path d="M935.100 79.500L946.300 72.600V80.400L935.100 87.300Z" fill="#c8c8c8"/>
<path d="M928.400 72.200L926.600 73.300V76.600M931.200 73.800L929.400 74.900V78.200M934 75.400L932.200 76.500V79.800" stroke="#0faf8b" stroke-width="1" fill="none"/>
<ellipse cx="977.900" cy="69.900" rx="7" ry="3" fill="#13c39b"/>
<path d="M968.900 78.600H987.400L990.400 89H965.900Z" fill="#dcdcdc"/>
<ellipse cx="977.900" cy="83.800" rx="6.900" ry="2.800" fill="#2b2b2d"/>
<path d="M1011 67.300H1028.400A4.600 4.600 0 0 1 1028.400 76.500H1025.200" stroke="#f4f4f4" stroke-width="1.100" fill="none"/>
<path d="M1016.400 76.200H1014.400A5 5 0 0 0 1014.400 86.200H1023.500" stroke="#13c39b" stroke-width="1.200" fill="none"/>
<polygon points="1020.5,72.0 1021.3,74.3 1023.5,73.2 1022.4,75.4 1024.7,76.2 1022.4,77.0 1023.5,79.2 1021.3,78.1 1020.5,80.4 1019.7,78.1 1017.5,79.2 1018.6,77.0 1016.3,76.2 1018.6,75.4 1017.5,73.2 1019.7,74.3" fill="#13c39b"/>
<path d="M1029.500 82V89M1026 85.500H1033" stroke="#fff" stroke-width="1.300"/>
</svg>
<!-- /HTOOLS -->
<!-- MODEL -->
<svg class="abs" style="left:0;top:0" width="1163" height="769" viewBox="0 0 1163 769">
<defs>
<linearGradient id="gtop" gradientUnits="userSpaceOnUse" x1="669.8" y1="565.0" x2="1015.5" y2="323.3"><stop offset="0" stop-color="#ebebeb"/><stop offset="0.45" stop-color="#dadada"/><stop offset="1" stop-color="#bcbcbc"/></linearGradient>
<linearGradient id="gear" gradientUnits="userSpaceOnUse" x1="669.8" y1="565.0" x2="1015.5" y2="323.3"><stop offset="0" stop-color="#e6e6e6"/><stop offset="1" stop-color="#c0c0c0"/></linearGradient>
<linearGradient id="ghole" x1="0.35" x2="0.6" y1="0" y2="1"><stop offset="0" stop-color="#5e5e5e"/><stop offset="0.5" stop-color="#454545"/><stop offset="1" stop-color="#262626"/></linearGradient>
<linearGradient id="gbore" x1="0" x2="1" y1="0.25" y2="0"><stop offset="0" stop-color="#525252"/><stop offset="0.4" stop-color="#7a7a7a"/><stop offset="0.9" stop-color="#acacac"/><stop offset="1" stop-color="#b0b0b0"/></linearGradient>
<linearGradient id="gbore2" x1="0" x2="1"><stop offset="0" stop-color="#9a9a9a"/><stop offset="1" stop-color="#6a6a6a"/></linearGradient>
<linearGradient id="gfil" x1="0" x2="0" y1="0" y2="1"><stop offset="0" stop-color="#0b9bf0"/><stop offset="1" stop-color="#0668b8"/></linearGradient>
<linearGradient id="gsm" x1="0" x2="1" y1="0" y2="1"><stop offset="0" stop-color="#0a86d6"/><stop offset="1" stop-color="#064a7c"/></linearGradient>
</defs>
<polygon points="736.2,638.6 738.3,640.4 740.2,660.6 738.1,658.8" fill="#7e7e7e" stroke="#7e7e7e" stroke-width="0.6"/>
<polygon points="738.3,640.4 740.8,642.1 742.7,662.2 740.2,660.6" fill="#828282" stroke="#828282" stroke-width="0.6"/>
<polygon points="740.8,642.1 743.4,643.5 745.3,663.7 742.7,662.2" fill="#858585" stroke="#858585" stroke-width="0.6"/>
<polygon points="743.4,643.5 746.2,644.7 748.1,664.9 745.3,663.7" fill="#888888" stroke="#888888" stroke-width="0.6"/>
<polygon points="746.2,644.7 749.1,645.7 751.0,665.9 748.1,664.9" fill="#8a8a8a" stroke="#8a8a8a" stroke-width="0.6"/>
<polygon points="749.1,645.7 752.1,646.5 754.0,666.6 751.0,665.9" fill="#8b8b8b" stroke="#8b8b8b" stroke-width="0.6"/>
<polygon points="752.1,646.5 755.3,647.0 757.2,667.1 754.0,666.6" fill="#8b8b8b" stroke="#8b8b8b" stroke-width="0.6"/>
<polygon points="755.3,647.0 758.5,647.2 760.4,667.4 757.2,667.1" fill="#8b8b8b" stroke="#8b8b8b" stroke-width="0.6"/>
<polygon points="758.5,647.2 761.7,647.2 763.6,667.4 760.4,667.4" fill="#8a8a8a" stroke="#8a8a8a" stroke-width="0.6"/>
<polygon points="761.7,647.2 764.9,646.9 766.8,667.1 763.6,667.4" fill="#888888" stroke="#888888" stroke-width="0.6"/>
<polygon points="764.9,646.9 768.1,646.4 770.0,666.6 766.8,667.1" fill="#858585" stroke="#858585" stroke-width="0.6"/>
<polygon points="768.1,646.4 771.3,645.7 773.2,665.8 770.0,666.6" fill="#828282" stroke="#828282" stroke-width="0.6"/>
<polygon points="771.3,645.7 774.3,644.7 776.2,664.8 773.2,665.8" fill="#7e7e7e" stroke="#7e7e7e" stroke-width="0.6"/>
<polygon points="774.3,644.7 777.2,643.5 779.1,663.6 776.2,664.8" fill="#7a7a7a" stroke="#7a7a7a" stroke-width="0.6"/>
<polygon points="777.2,643.5 780.0,642.0 781.9,662.2 779.1,663.6" fill="#767676" stroke="#767676" stroke-width="0.6"/>
<polygon points="780.0,642.0 782.6,640.4 784.5,660.5 781.9,662.2" fill="#717171" stroke="#717171" stroke-width="0.6"/>
<polygon points="782.6,640.4 1077.5,434.0 1079.4,454.2 784.5,660.5" fill="#6f6f6f" stroke="#6f6f6f" stroke-width="0.6"/>
<polygon points="1077.5,434.0 1079.9,432.2 1081.8,452.3 1079.4,454.2" fill="#6d6d6d" stroke="#6d6d6d" stroke-width="0.6"/>
<polygon points="1079.9,432.2 1082.1,430.2 1084.0,450.3 1081.8,452.3" fill="#696969" stroke="#696969" stroke-width="0.6"/>
<polygon points="1082.1,430.2 1084.0,428.0 1085.9,448.2 1084.0,450.3" fill="#666666" stroke="#666666" stroke-width="0.6"/>
<polygon points="1084.0,428.0 1085.6,425.8 1087.5,445.9 1085.9,448.2" fill="#636363" stroke="#636363" stroke-width="0.6"/>
<polygon points="1085.6,425.8 1087.0,423.4 1088.9,443.5 1087.5,445.9" fill="#616161" stroke="#616161" stroke-width="0.6"/>
<polygon points="1087.0,423.4 1088.0,420.9 1090.0,441.0 1088.9,443.5" fill="#606060" stroke="#606060" stroke-width="0.6"/>
<polygon points="1088.0,420.9 1088.8,418.4 1090.7,438.5 1090.0,441.0" fill="#606060" stroke="#606060" stroke-width="0.6"/>
<polygon points="1088.8,418.4 1089.3,415.8 1091.2,435.9 1090.7,438.5" fill="#606060" stroke="#606060" stroke-width="0.6"/>
<polygon points="1089.3,415.8 1089.4,413.2 1091.3,433.4 1091.2,435.9" fill="#606060" stroke="#606060" stroke-width="0.6"/>
<polygon points="1089.4,413.2 1089.2,410.6 1091.1,430.8 1091.3,433.4" fill="#606060" stroke="#606060" stroke-width="0.6"/>
<polygon points="598.6,504.6 599.1,507.1 601.0,527.3 600.5,524.7" fill="#666666" stroke="#666666" stroke-width="0.6"/>
<polygon points="599.1,507.1 599.9,509.6 601.8,529.7 601.0,527.3" fill="#696969" stroke="#696969" stroke-width="0.6"/>
<polygon points="599.9,509.6 601.0,512.0 602.9,532.1 601.8,529.7" fill="#6d6d6d" stroke="#6d6d6d" stroke-width="0.6"/>
<polygon points="601.0,512.0 602.4,514.2 604.4,534.4 602.9,532.1" fill="#717171" stroke="#717171" stroke-width="0.6"/>
<polygon points="602.4,514.2 604.1,516.4 606.0,536.5 604.4,534.4" fill="#757575" stroke="#757575" stroke-width="0.6"/>
<polygon points="604.1,516.4 606.1,518.4 608.0,538.5 606.0,536.5" fill="#7a7a7a" stroke="#7a7a7a" stroke-width="0.6"/>
<polygon points="606.1,518.4 736.2,638.6 738.1,658.8 608.0,538.5" fill="#7c7c7c" stroke="#7c7c7c" stroke-width="0.6"/>
<polygon points="738.1,658.8 740.2,660.6 742.7,662.2 745.3,663.7 748.1,664.9 751.0,665.9 754.0,666.6 757.2,667.1 760.4,667.4 763.6,667.4 766.8,667.1 770.0,666.6 773.2,665.8 776.2,664.8 779.1,663.6 781.9,662.2 784.5,660.5 1079.4,454.2 1081.8,452.3 1084.0,450.3 1085.9,448.2 1087.5,445.9 1088.9,443.5 1090.0,441.0 1090.7,438.5 1091.2,435.9 1091.3,433.4 1091.1,430.8 1090.6,428.2 1089.8,425.8 1088.7,423.4 1087.3,421.1 1085.6,419.0 1083.7,417.0 953.6,296.7 951.4,294.9 949.0,293.3 946.4,291.9 943.6,290.6 940.7,289.6 937.6,288.9 934.5,288.4 931.3,288.2 928.0,288.2 924.8,288.4 921.6,288.9 918.5,289.7 915.5,290.7 912.5,291.9 909.8,293.3 907.2,295.0 612.2,501.3 609.8,503.2 607.7,505.2 605.8,507.3 604.1,509.6 602.8,512.0 601.7,514.5 600.9,517.0 600.5,519.6 600.3,522.2 600.5,524.7 601.0,527.3 601.8,529.7 602.9,532.1 604.4,534.4 606.0,536.5 608.0,538.5" fill="none" stroke="#3a3a3a" stroke-width="0.7"/>
<polygon points="736.2,638.6 738.3,640.4 740.8,642.1 743.4,643.5 746.2,644.7 749.1,645.7 752.1,646.5 755.3,647.0 758.5,647.2 761.7,647.2 764.9,646.9 768.1,646.4 771.3,645.7 774.3,644.7 777.2,643.5 780.0,642.0 782.6,640.4 1077.5,434.0 1079.9,432.2 1082.1,430.2 1084.0,428.0 1085.6,425.8 1087.0,423.4 1088.0,420.9 1088.8,418.4 1089.3,415.8 1089.4,413.2 1089.2,410.6 1088.7,408.1 1087.9,405.6 1086.8,403.2 1085.4,401.0 1083.7,398.8 1081.8,396.8 951.7,276.6 949.5,274.8 947.1,273.1 944.5,271.7 941.7,270.5 938.8,269.5 935.7,268.8 932.6,268.3 929.4,268.0 926.1,268.0 922.9,268.3 919.7,268.8 916.6,269.5 913.5,270.5 910.6,271.7 907.9,273.2 905.3,274.8 610.3,481.2 607.9,483.0 605.8,485.0 603.9,487.2 602.2,489.5 600.9,491.8 599.8,494.3 599.0,496.8 598.6,499.4 598.4,502.0 598.6,504.6 599.1,507.1 599.9,509.6 601.0,512.0 602.4,514.2 604.1,516.4 606.1,518.4" fill="url(#gear)" stroke="#2a2a2a" stroke-width="0.8"/>
<clipPath id="hca"><polygon points="658.9,488.5 657.6,487.4 656.2,486.5 654.7,485.7 653.0,485.0 651.3,484.4 649.5,484.0 647.6,483.8 645.7,483.7 643.8,483.7 641.9,484.0 640.0,484.3 638.2,484.9 636.5,485.5 634.8,486.3 633.3,487.3 631.9,488.3 630.6,489.5 629.4,490.7 628.4,492.1 627.6,493.5 627.0,494.9 626.6,496.4 626.3,497.9 626.3,499.4 626.4,501.0 626.8,502.4 627.3,503.9 628.0,505.3 628.9,506.6 630.0,507.8 631.2,508.9 632.5,509.9 634.0,510.8 635.6,511.6 637.3,512.2 639.1,512.7 640.9,513.0 642.8,513.2 644.7,513.2 646.6,513.1 648.5,512.8 650.3,512.3 652.1,511.7 653.8,511.0 655.4,510.1 656.9,509.1 658.3,508.0 659.5,506.8 660.6,505.5 661.5,504.1 662.2,502.7 662.7,501.2 663.1,499.7 663.2,498.2 663.2,496.7 662.9,495.2 662.5,493.7 661.8,492.3 661.0,491.0 660.1,489.7"/></clipPath>
<polygon points="658.9,488.5 657.6,487.4 656.2,486.5 654.7,485.7 653.0,485.0 651.3,484.4 649.5,484.0 647.6,483.8 645.7,483.7 643.8,483.7 641.9,484.0 640.0,484.3 638.2,484.9 636.5,485.5 634.8,486.3 633.3,487.3 631.9,488.3 630.6,489.5 629.4,490.7 628.4,492.1 627.6,493.5 627.0,494.9 626.6,496.4 626.3,497.9 626.3,499.4 626.4,501.0 626.8,502.4 627.3,503.9 628.0,505.3 628.9,506.6 630.0,507.8 631.2,508.9 632.5,509.9 634.0,510.8 635.6,511.6 637.3,512.2 639.1,512.7 640.9,513.0 642.8,513.2 644.7,513.2 646.6,513.1 648.5,512.8 650.3,512.3 652.1,511.7 653.8,511.0 655.4,510.1 656.9,509.1 658.3,508.0 659.5,506.8 660.6,505.5 661.5,504.1 662.2,502.7 662.7,501.2 663.1,499.7 663.2,498.2 663.2,496.7 662.9,495.2 662.5,493.7 661.8,492.3 661.0,491.0 660.1,489.7" fill="url(#ghole)" stroke="#1e1e1e" stroke-width="0.9"/>
<polygon points="661.3,503.3 661.8,502.0 662.3,500.7 662.5,499.3 662.6,498.0 662.5,496.6 662.3,495.3 661.9,494.0 661.4,492.8 660.7,491.6 659.9,490.4" fill="#6a6a6a" opacity="0.8"/>
<polygon points="660.8,508.7 659.5,507.6 658.1,506.6 656.6,505.8 654.9,505.1 653.2,504.6 651.4,504.2 649.5,503.9 647.6,503.8 645.7,503.9 643.8,504.1 642.0,504.5 640.1,505.0 638.4,505.7 636.7,506.5 635.2,507.4 633.8,508.5 632.5,509.6 631.3,510.9 630.3,512.2 629.5,513.6 628.9,515.1 628.5,516.6 628.2,518.1 628.2,519.6 628.3,521.1 628.7,522.6 629.2,524.0 629.9,525.4 630.8,526.7 631.9,527.9 633.1,529.1 634.4,530.1 635.9,531.0 637.5,531.7 639.2,532.4 641.0,532.8 642.9,533.2 644.7,533.3 646.6,533.3 648.5,533.2 650.4,532.9 652.2,532.5 654.0,531.9 655.7,531.1 657.3,530.3 658.8,529.3 660.2,528.2 661.4,526.9 662.5,525.7 663.4,524.3 664.1,522.9 664.6,521.4 665.0,519.9 665.1,518.4 665.1,516.8 664.8,515.3 664.4,513.9 663.8,512.5 662.9,511.1 662.0,509.8" fill="#141414" clip-path="url(#hca)"/>
<clipPath id="hcb"><polygon points="1057.3,406.8 1056.0,405.8 1054.6,404.8 1053.0,404.0 1051.4,403.3 1049.6,402.7 1047.8,402.3 1046.0,402.1 1044.1,402.0 1042.2,402.1 1040.3,402.3 1038.4,402.7 1036.6,403.2 1034.9,403.8 1033.2,404.7 1031.7,405.6 1030.2,406.6 1028.9,407.8 1027.8,409.0 1026.8,410.4 1026.0,411.8 1025.4,413.2 1024.9,414.7 1024.7,416.2 1024.6,417.8 1024.8,419.3 1025.1,420.8 1025.7,422.2 1026.4,423.6 1027.3,424.9 1028.3,426.1 1029.5,427.2 1030.9,428.3 1032.4,429.1 1034.0,429.9 1035.7,430.5 1037.5,431.0 1039.3,431.3 1041.2,431.5 1043.1,431.5 1045.0,431.4 1046.9,431.1 1048.7,430.6 1050.5,430.0 1052.2,429.3 1053.8,428.4 1055.3,427.4 1056.6,426.3 1057.9,425.1 1058.9,423.8 1059.8,422.4 1060.5,421.0 1061.1,419.5 1061.4,418.0 1061.6,416.5 1061.5,415.0 1061.3,413.5 1060.8,412.0 1060.2,410.6 1059.4,409.3 1058.4,408.0"/></clipPath>
<polygon points="1057.3,406.8 1056.0,405.8 1054.6,404.8 1053.0,404.0 1051.4,403.3 1049.6,402.7 1047.8,402.3 1046.0,402.1 1044.1,402.0 1042.2,402.1 1040.3,402.3 1038.4,402.7 1036.6,403.2 1034.9,403.8 1033.2,404.7 1031.7,405.6 1030.2,406.6 1028.9,407.8 1027.8,409.0 1026.8,410.4 1026.0,411.8 1025.4,413.2 1024.9,414.7 1024.7,416.2 1024.6,417.8 1024.8,419.3 1025.1,420.8 1025.7,422.2 1026.4,423.6 1027.3,424.9 1028.3,426.1 1029.5,427.2 1030.9,428.3 1032.4,429.1 1034.0,429.9 1035.7,430.5 1037.5,431.0 1039.3,431.3 1041.2,431.5 1043.1,431.5 1045.0,431.4 1046.9,431.1 1048.7,430.6 1050.5,430.0 1052.2,429.3 1053.8,428.4 1055.3,427.4 1056.6,426.3 1057.9,425.1 1058.9,423.8 1059.8,422.4 1060.5,421.0 1061.1,419.5 1061.4,418.0 1061.6,416.5 1061.5,415.0 1061.3,413.5 1060.8,412.0 1060.2,410.6 1059.4,409.3 1058.4,408.0" fill="url(#ghole)" stroke="#1e1e1e" stroke-width="0.9"/>
<polygon points="1059.6,421.6 1060.2,420.3 1060.6,419.0 1060.9,417.6 1061.0,416.3 1060.9,415.0 1060.7,413.6 1060.3,412.3 1059.8,411.1 1059.1,409.9 1058.3,408.7" fill="#6a6a6a" opacity="0.8"/>
<polygon points="1059.2,427.0 1057.9,425.9 1056.5,425.0 1054.9,424.1 1053.3,423.4 1051.5,422.9 1049.7,422.5 1047.9,422.2 1046.0,422.2 1044.1,422.2 1042.2,422.4 1040.3,422.8 1038.5,423.3 1036.8,424.0 1035.1,424.8 1033.6,425.7 1032.1,426.8 1030.8,427.9 1029.7,429.2 1028.7,430.5 1027.9,431.9 1027.3,433.4 1026.8,434.9 1026.6,436.4 1026.5,437.9 1026.7,439.4 1027.0,440.9 1027.6,442.3 1028.3,443.7 1029.2,445.0 1030.2,446.3 1031.4,447.4 1032.8,448.4 1034.3,449.3 1035.9,450.1 1037.6,450.7 1039.4,451.2 1041.2,451.5 1043.1,451.6 1045.0,451.7 1046.9,451.5 1048.8,451.2 1050.6,450.8 1052.4,450.2 1054.1,449.4 1055.7,448.6 1057.2,447.6 1058.6,446.5 1059.8,445.3 1060.8,444.0 1061.7,442.6 1062.4,441.2 1063.0,439.7 1063.3,438.2 1063.5,436.7 1063.4,435.2 1063.2,433.7 1062.7,432.2 1062.1,430.8 1061.3,429.4 1060.3,428.2" fill="#141414" clip-path="url(#hcb)"/>
<polygon points="734.9,625.2 737.1,627.0 738.3,640.4 736.2,638.6" fill="#898989" stroke="#898989" stroke-width="0.6"/>
<polygon points="737.1,627.0 739.5,628.6 740.8,642.1 738.3,640.4" fill="#8e8e8e" stroke="#8e8e8e" stroke-width="0.6"/>
<polygon points="739.5,628.6 742.1,630.1 743.4,643.5 740.8,642.1" fill="#939393" stroke="#939393" stroke-width="0.6"/>
<polygon points="742.1,630.1 744.9,631.3 746.2,644.7 743.4,643.5" fill="#969696" stroke="#969696" stroke-width="0.6"/>
<polygon points="744.9,631.3 747.8,632.3 749.1,645.7 746.2,644.7" fill="#999999" stroke="#999999" stroke-width="0.6"/>
<polygon points="747.8,632.3 750.9,633.0 752.1,646.5 749.1,645.7" fill="#9b9b9b" stroke="#9b9b9b" stroke-width="0.6"/>
<polygon points="750.9,633.0 754.0,633.5 755.3,647.0 752.1,646.5" fill="#9b9b9b" stroke="#9b9b9b" stroke-width="0.6"/>
<polygon points="754.0,633.5 757.2,633.8 758.5,647.2 755.3,647.0" fill="#9b9b9b" stroke="#9b9b9b" stroke-width="0.6"/>
<polygon points="757.2,633.8 760.4,633.7 761.7,647.2 758.5,647.2" fill="#999999" stroke="#999999" stroke-width="0.6"/>
<polygon points="760.4,633.7 763.7,633.5 764.9,646.9 761.7,647.2" fill="#979797" stroke="#979797" stroke-width="0.6"/>
<polygon points="763.7,633.5 766.9,633.0 768.1,646.4 764.9,646.9" fill="#939393" stroke="#939393" stroke-width="0.6"/>
<polygon points="766.9,633.0 770.0,632.2 771.3,645.7 768.1,646.4" fill="#8f8f8f" stroke="#8f8f8f" stroke-width="0.6"/>
<polygon points="770.0,632.2 773.0,631.2 774.3,644.7 771.3,645.7" fill="#8a8a8a" stroke="#8a8a8a" stroke-width="0.6"/>
<polygon points="773.0,631.2 775.9,630.0 777.2,643.5 774.3,644.7" fill="#848484" stroke="#848484" stroke-width="0.6"/>
<polygon points="775.9,630.0 778.7,628.6 780.0,642.0 777.2,643.5" fill="#7f7f7f" stroke="#7f7f7f" stroke-width="0.6"/>
<polygon points="778.7,628.6 781.3,626.9 782.6,640.4 780.0,642.0" fill="#797979" stroke="#797979" stroke-width="0.6"/>
<polygon points="781.3,626.9 1033.2,450.7 1034.5,464.1 782.6,640.4" fill="#767676" stroke="#767676" stroke-width="0.6"/>
<polygon points="990.7,407.6 990.6,406.2 991.9,419.6 992.0,421.0" fill="#626262" stroke="#626262" stroke-width="0.6"/>
<polygon points="990.6,406.2 990.7,404.8 992.0,418.2 991.9,419.6" fill="#626262" stroke="#626262" stroke-width="0.6"/>
<polygon points="990.7,404.8 990.9,403.4 992.2,416.8 992.0,418.2" fill="#626262" stroke="#626262" stroke-width="0.6"/>
<polygon points="990.9,403.4 991.4,402.0 992.6,415.4 992.2,416.8" fill="#626262" stroke="#626262" stroke-width="0.6"/>
<polygon points="991.4,402.0 991.9,400.6 993.2,414.1 992.6,415.4" fill="#626262" stroke="#626262" stroke-width="0.6"/>
<polygon points="991.9,400.6 992.7,399.3 993.9,412.8 993.2,414.1" fill="#646464" stroke="#646464" stroke-width="0.6"/>
<polygon points="992.7,399.3 993.6,398.1 994.8,411.5 993.9,412.8" fill="#676767" stroke="#676767" stroke-width="0.6"/>
<polygon points="993.6,398.1 994.6,396.9 995.9,410.4 994.8,411.5" fill="#6a6a6a" stroke="#6a6a6a" stroke-width="0.6"/>
<polygon points="994.6,396.9 995.8,395.8 997.1,409.3 995.9,410.4" fill="#6f6f6f" stroke="#6f6f6f" stroke-width="0.6"/>
<polygon points="995.8,395.8 997.1,394.8 998.4,408.3 997.1,409.3" fill="#747474" stroke="#747474" stroke-width="0.6"/>
<polygon points="997.1,394.8 1051.6,356.7 1052.9,370.1 998.4,408.3" fill="#767676" stroke="#767676" stroke-width="0.6"/>
<polygon points="652.1,437.6 690.5,473.2 691.8,486.6 653.3,451.1" fill="#878787" stroke="#878787" stroke-width="0.6"/>
<polygon points="690.5,473.2 691.6,474.3 692.9,487.7 691.8,486.6" fill="#848484" stroke="#848484" stroke-width="0.6"/>
<polygon points="691.6,474.3 692.5,475.4 693.8,488.9 692.9,487.7" fill="#7e7e7e" stroke="#7e7e7e" stroke-width="0.6"/>
<polygon points="692.5,475.4 693.3,476.7 694.5,490.1 693.8,488.9" fill="#797979" stroke="#797979" stroke-width="0.6"/>
<polygon points="693.3,476.7 693.9,478.0 695.1,491.4 694.5,490.1" fill="#737373" stroke="#737373" stroke-width="0.6"/>
<polygon points="693.9,478.0 694.3,479.3 695.6,492.8 695.1,491.4" fill="#6e6e6e" stroke="#6e6e6e" stroke-width="0.6"/>
<polygon points="694.3,479.3 694.6,480.7 695.9,494.2 695.6,492.8" fill="#6a6a6a" stroke="#6a6a6a" stroke-width="0.6"/>
<polygon points="633.7,531.6 734.9,625.2 736.2,638.6 635.0,545.1" fill="#878787" stroke="#878787" stroke-width="0.6"/>
<path d="M736.2 638.6L738.3 640.4M738.3 640.4L740.8 642.1M740.8 642.1L743.4 643.5M743.4 643.5L746.2 644.7M746.2 644.7L749.1 645.7M749.1 645.7L752.1 646.5M752.1 646.5L755.3 647.0M755.3 647.0L758.5 647.2M758.5 647.2L761.7 647.2M761.7 647.2L764.9 646.9M764.9 646.9L768.1 646.4M768.1 646.4L771.3 645.7M771.3 645.7L774.3 644.7M774.3 644.7L777.2 643.5M777.2 643.5L780.0 642.0M780.0 642.0L782.6 640.4M782.6 640.4L1034.5 464.1M992.0 421.0L991.9 419.6M991.9 419.6L992.0 418.2M992.0 418.2L992.2 416.8M992.2 416.8L992.6 415.4M992.6 415.4L993.2 414.1M993.2 414.1L993.9 412.8M993.9 412.8L994.8 411.5M994.8 411.5L995.9 410.4M995.9 410.4L997.1 409.3M997.1 409.3L998.4 408.3M998.4 408.3L1052.9 370.1M653.3 451.1L691.8 486.6M691.8 486.6L692.9 487.7M692.9 487.7L693.8 488.9M693.8 488.9L694.5 490.1M694.5 490.1L695.1 491.4M695.1 491.4L695.6 492.8M695.6 492.8L695.9 494.2M635.0 545.1L736.2 638.6" stroke="#2c2c2c" stroke-width="0.8" fill="none" stroke-linecap="round"/>
<polygon points="734.9,625.2 737.1,627.0 739.5,628.6 742.1,630.1 744.9,631.3 747.8,632.3 750.9,633.0 754.0,633.5 757.2,633.8 760.4,633.7 763.7,633.5 766.9,633.0 770.0,632.2 773.0,631.2 775.9,630.0 778.7,628.6 781.3,626.9 1033.2,450.7 994.8,415.1 993.7,414.0 992.8,412.9 992.0,411.6 991.4,410.3 991.0,409.0 990.7,407.6 990.6,406.2 990.7,404.8 990.9,403.4 991.4,402.0 991.9,400.6 992.7,399.3 993.6,398.1 994.6,396.9 995.8,395.8 997.1,394.8 1051.6,356.7 950.4,263.1 948.2,261.3 945.8,259.7 943.2,258.2 940.4,257.0 937.5,256.0 934.4,255.3 931.3,254.8 928.1,254.5 924.9,254.6 921.6,254.8 918.4,255.3 915.3,256.1 912.3,257.1 909.4,258.3 906.6,259.7 904.0,261.4 652.1,437.6 690.5,473.2 691.6,474.3 692.5,475.4 693.3,476.7 693.9,478.0 694.3,479.3 694.6,480.7 694.7,482.1 694.6,483.5 694.4,484.9 693.9,486.3 693.4,487.7 692.6,489.0 691.7,490.2 690.7,491.4 689.5,492.5 688.2,493.5 633.7,531.6" fill="url(#gtop)" stroke="#2a2a2a" stroke-width="0.8"/>
<clipPath id="hcc"><polygon points="934.7,281.2 933.4,280.2 932.0,279.2 930.4,278.4 928.8,277.7 927.0,277.2 925.2,276.8 923.4,276.5 921.5,276.4 919.6,276.5 917.7,276.7 915.8,277.1 914.0,277.6 912.3,278.3 910.6,279.1 909.1,280.0 907.6,281.0 906.3,282.2 905.2,283.5 904.2,284.8 903.4,286.2 902.8,287.7 902.3,289.1 902.1,290.7 902.0,292.2 902.2,293.7 902.5,295.2 903.1,296.6 903.8,298.0 904.7,299.3 905.7,300.5 906.9,301.6 908.3,302.7 909.8,303.6 911.4,304.3 913.1,304.9 914.9,305.4 916.7,305.7 918.6,305.9 920.5,305.9 922.4,305.8 924.3,305.5 926.1,305.0 927.9,304.4 929.6,303.7 931.2,302.8 932.7,301.8 934.1,300.7 935.3,299.5 936.3,298.2 937.2,296.9 937.9,295.4 938.5,294.0 938.8,292.4 939.0,290.9 938.9,289.4 938.7,287.9 938.2,286.5 937.6,285.0 936.8,283.7 935.8,282.4"/></clipPath>
<polygon points="934.7,281.2 933.4,280.2 932.0,279.2 930.4,278.4 928.8,277.7 927.0,277.2 925.2,276.8 923.4,276.5 921.5,276.4 919.6,276.5 917.7,276.7 915.8,277.1 914.0,277.6 912.3,278.3 910.6,279.1 909.1,280.0 907.6,281.0 906.3,282.2 905.2,283.5 904.2,284.8 903.4,286.2 902.8,287.7 902.3,289.1 902.1,290.7 902.0,292.2 902.2,293.7 902.5,295.2 903.1,296.6 903.8,298.0 904.7,299.3 905.7,300.5 906.9,301.6 908.3,302.7 909.8,303.6 911.4,304.3 913.1,304.9 914.9,305.4 916.7,305.7 918.6,305.9 920.5,305.9 922.4,305.8 924.3,305.5 926.1,305.0 927.9,304.4 929.6,303.7 931.2,302.8 932.7,301.8 934.1,300.7 935.3,299.5 936.3,298.2 937.2,296.9 937.9,295.4 938.5,294.0 938.8,292.4 939.0,290.9 938.9,289.4 938.7,287.9 938.2,286.5 937.6,285.0 936.8,283.7 935.8,282.4" fill="url(#ghole)" stroke="#1e1e1e" stroke-width="0.9"/>
<polygon points="937.0,296.0 937.6,294.7 938.0,293.4 938.3,292.1 938.4,290.7 938.3,289.4 938.1,288.0 937.7,286.7 937.2,285.5 936.5,284.3 935.7,283.1" fill="#6a6a6a" opacity="0.8"/>
<clipPath id="hcd"><polygon points="779.0,587.2 777.7,586.1 776.3,585.2 774.7,584.3 773.1,583.7 771.3,583.1 769.5,582.7 767.6,582.5 765.8,582.4 763.9,582.4 762.0,582.7 760.1,583.0 758.3,583.5 756.5,584.2 754.9,585.0 753.3,586.0 751.9,587.0 750.6,588.2 749.5,589.4 748.5,590.7 747.7,592.2 747.1,593.6 746.6,595.1 746.4,596.6 746.3,598.1 746.5,599.6 746.8,601.1 747.3,602.6 748.1,603.9 749.0,605.3 750.0,606.5 751.2,607.6 752.6,608.6 754.1,609.5 755.7,610.3 757.4,610.9 759.2,611.4 761.0,611.7 762.9,611.9 764.8,611.9 766.7,611.7 768.6,611.4 770.4,611.0 772.2,610.4 773.9,609.7 775.5,608.8 777.0,607.8 778.3,606.7 779.6,605.5 780.6,604.2 781.5,602.8 782.2,601.4 782.8,599.9 783.1,598.4 783.3,596.9 783.2,595.4 783.0,593.9 782.5,592.4 781.9,591.0 781.1,589.6 780.1,588.4"/></clipPath>
<polygon points="779.0,587.2 777.7,586.1 776.3,585.2 774.7,584.3 773.1,583.7 771.3,583.1 769.5,582.7 767.6,582.5 765.8,582.4 763.9,582.4 762.0,582.7 760.1,583.0 758.3,583.5 756.5,584.2 754.9,585.0 753.3,586.0 751.9,587.0 750.6,588.2 749.5,589.4 748.5,590.7 747.7,592.2 747.1,593.6 746.6,595.1 746.4,596.6 746.3,598.1 746.5,599.6 746.8,601.1 747.3,602.6 748.1,603.9 749.0,605.3 750.0,606.5 751.2,607.6 752.6,608.6 754.1,609.5 755.7,610.3 757.4,610.9 759.2,611.4 761.0,611.7 762.9,611.9 764.8,611.9 766.7,611.7 768.6,611.4 770.4,611.0 772.2,610.4 773.9,609.7 775.5,608.8 777.0,607.8 778.3,606.7 779.6,605.5 780.6,604.2 781.5,602.8 782.2,601.4 782.8,599.9 783.1,598.4 783.3,596.9 783.2,595.4 783.0,593.9 782.5,592.4 781.9,591.0 781.1,589.6 780.1,588.4" fill="url(#ghole)" stroke="#1e1e1e" stroke-width="0.9"/>
<polygon points="781.3,602.0 781.9,600.7 782.3,599.3 782.6,598.0 782.7,596.7 782.6,595.3 782.4,594.0 782.0,592.7 781.5,591.4 780.8,590.2 780.0,589.1" fill="#6a6a6a" opacity="0.8"/>
<polygon points="825.4,371.5 819.2,372.8 813.1,374.5 807.2,376.4 801.4,378.7 795.9,381.3 790.5,384.1 785.4,387.3 780.5,390.7 775.9,394.3 771.7,398.2 767.7,402.3 764.1,406.5 760.9,411.0 758.0,415.6 755.6,420.3 720.4,494.3 719.2,497.3 718.3,500.4 717.9,503.6 717.8,506.7 718.2,509.9 718.9,512.9 720.0,515.9 721.5,518.7 723.4,521.5 725.6,524.0 728.1,526.3 730.9,528.4 734.0,530.3 737.3,531.9 740.8,533.2 744.5,534.2 748.3,534.9 752.2,535.3 756.1,535.4 760.1,535.1 764.0,534.6 859.9,516.8 866.1,515.5 872.2,513.8 878.1,511.9 883.9,509.6 889.4,507.0 894.8,504.2 899.9,501.0 904.8,497.6 909.4,494.0 913.6,490.1 917.6,486.0 921.2,481.8 924.4,477.3 927.3,472.7 929.7,468.0 964.9,394.0 966.1,391.0 967.0,387.9 967.4,384.7 967.5,381.6 967.1,378.4 966.4,375.4 965.3,372.4 963.8,369.6 961.9,366.8 959.7,364.3 957.2,362.0 954.4,359.9 951.3,358.0 948.0,356.4 944.5,355.1 940.8,354.1 937.0,353.4 933.1,353.0 929.2,352.9 925.2,353.2 921.3,353.7" fill="#0560aa" stroke="#00f0ff" stroke-width="1.6" stroke-linejoin="round"/>
<polygon points="825.9,373.7 820.0,375.0 814.2,376.6 808.4,378.5 802.9,380.7 797.5,383.1 792.3,385.9 787.4,388.9 782.7,392.2 778.3,395.7 774.2,399.4 770.4,403.4 766.9,407.5 763.8,411.8 761.1,416.2 758.7,420.8 723.5,494.8 722.4,497.5 721.6,500.4 721.2,503.2 721.2,506.1 721.5,509.0 722.2,511.8 723.2,514.5 724.6,517.1 726.3,519.6 728.3,521.9 730.6,524.0 733.1,525.9 735.9,527.6 739.0,529.1 742.2,530.3 745.5,531.2 749.0,531.8 752.5,532.2 756.1,532.3 759.7,532.0 763.3,531.5 859.3,513.8 865.2,512.5 871.1,510.9 876.8,509.0 882.3,506.8 887.7,504.4 892.9,501.6 897.8,498.6 902.5,495.3 906.9,491.8 911.0,488.1 914.8,484.1 918.3,480.0 921.4,475.7 924.2,471.3 926.6,466.7 961.7,392.7 962.8,390.0 963.6,387.1 964.0,384.3 964.1,381.4 963.7,378.5 963.1,375.7 962.0,373.0 960.7,370.4 959.0,367.9 957.0,365.6 954.7,363.5 952.1,361.6 949.3,359.9 946.3,358.4 943.0,357.2 939.7,356.3 936.2,355.7 932.7,355.3 929.1,355.2 925.5,355.5 921.9,356.0" fill="#0668b6"/>
<polygon points="826.3,374.7 820.5,376.0 814.8,377.5 809.3,379.3 803.9,381.5 798.6,383.9 793.6,386.6 788.8,389.5 784.2,392.7 780.0,396.1 775.9,399.8 772.3,403.6 768.9,407.6 765.8,411.8 763.2,416.1 760.8,420.5 725.7,494.5 724.6,497.1 723.9,499.7 723.5,502.4 723.5,505.1 723.8,507.7 724.4,510.4 725.4,512.9 726.6,515.3 728.2,517.6 730.1,519.8 732.3,521.8 734.7,523.6 737.3,525.1 740.1,526.5 743.1,527.6 746.2,528.5 749.4,529.1 752.7,529.4 756.1,529.5 759.4,529.3 762.8,528.8 858.8,511.0 864.5,509.8 870.2,508.3 875.8,506.4 881.2,504.3 886.4,501.9 891.5,499.2 896.3,496.2 900.8,493.1 905.1,489.6 909.1,486.0 912.8,482.2 916.2,478.2 919.2,474.0 921.9,469.7 924.2,465.2 959.4,391.2 960.4,388.7 961.1,386.0 961.5,383.3 961.6,380.7 961.3,378.0 960.6,375.4 959.7,372.9 958.4,370.4 956.8,368.1 955.0,366.0 952.8,364.0 950.4,362.2 947.8,360.6 945.0,359.3 942.0,358.1 938.9,357.3 935.6,356.7 932.3,356.4 929.0,356.3 925.6,356.5 922.3,357.0" fill="#0874c6"/>
<polygon points="826.5,374.9 820.9,376.1 815.3,377.6 809.9,379.4 804.6,381.5 799.4,383.9 794.5,386.5 789.8,389.4 785.3,392.5 781.1,395.8 777.2,399.4 773.6,403.1 770.3,407.1 767.3,411.2 764.7,415.4 762.4,419.7 727.3,493.7 726.3,496.1 725.6,498.6 725.3,501.2 725.2,503.7 725.5,506.2 726.1,508.7 727.0,511.1 728.2,513.4 729.7,515.5 731.5,517.6 733.5,519.4 735.8,521.1 738.2,522.6 740.9,523.9 743.7,525.0 746.7,525.8 749.7,526.3 752.8,526.7 756.0,526.7 759.2,526.5 762.3,526.1 858.3,508.3 864.0,507.1 869.5,505.6 875.0,503.8 880.3,501.7 885.4,499.3 890.3,496.7 895.0,493.8 899.5,490.7 903.7,487.4 907.6,483.8 911.2,480.1 914.5,476.1 917.5,472.0 920.1,467.8 922.4,463.5 957.5,389.5 958.5,387.1 959.2,384.6 959.6,382.0 959.6,379.5 959.3,377.0 958.7,374.5 957.8,372.1 956.6,369.8 955.1,367.7 953.4,365.6 951.3,363.8 949.1,362.1 946.6,360.6 943.9,359.3 941.1,358.2 938.2,357.4 935.1,356.9 932.0,356.5 928.8,356.5 925.7,356.7 922.5,357.1" fill="#0a84da"/>
<polygon points="826.6,374.2 821.0,375.4 815.5,376.9 810.1,378.6 804.9,380.7 799.8,383.0 795.0,385.6 790.3,388.5 785.9,391.5 781.8,394.9 777.9,398.4 774.3,402.1 771.1,405.9 768.1,410.0 765.6,414.1 763.3,418.4 728.2,492.4 727.2,494.8 726.6,497.2 726.2,499.6 726.2,502.1 726.4,504.5 727.0,506.9 727.9,509.2 729.0,511.4 730.5,513.5 732.2,515.4 734.1,517.3 736.3,518.9 738.7,520.3 741.3,521.6 744.0,522.6 746.9,523.4 749.8,523.9 752.8,524.2 755.9,524.3 758.9,524.1 762.0,523.7 857.9,505.9 863.5,504.7 869.0,503.2 874.4,501.4 879.6,499.4 884.7,497.0 889.5,494.4 894.2,491.6 898.6,488.5 902.7,485.2 906.6,481.7 910.2,478.0 913.4,474.1 916.4,470.1 919.0,465.9 921.2,461.6 956.4,387.6 957.3,385.3 958.0,382.9 958.3,380.5 958.4,378.0 958.1,375.6 957.5,373.2 956.6,370.9 955.5,368.7 954.0,366.6 952.3,364.6 950.4,362.8 948.2,361.2 945.8,359.7 943.2,358.5 940.5,357.5 937.7,356.7 934.7,356.2 931.7,355.9 928.7,355.8 925.6,356.0 922.6,356.4" fill="#0b96ee"/>
<polygon points="721.7,452.2 722.0,454.6 722.5,456.9 723.4,459.2 724.6,461.4 726.0,463.5 727.7,465.4 729.6,467.2 731.8,468.8 734.2,470.3 736.7,471.5 739.4,472.5 742.2,473.3 745.2,473.8 748.1,474.1 751.2,474.2 754.2,474.0 757.2,473.6 853.2,455.8 858.8,454.6 864.2,453.1 869.6,451.4 874.8,449.3 879.8,447.0 884.7,444.4 889.3,441.6 893.7,438.5 897.8,435.2 901.7,431.7 905.3,428.0 908.5,424.1 911.4,420.1 914.0,416.0 916.3,411.7 951.4,337.7 952.3,335.4 953.0,333.0 953.3,330.6 953.4,328.1 958.0,376.7 957.9,379.1 957.6,381.5 956.9,383.9 956.0,386.3 920.8,460.2 918.6,464.5 916.0,468.7 913.1,472.7 909.8,476.6 906.3,480.3 902.4,483.8 898.3,487.1 893.9,490.1 889.3,493.0 884.4,495.5 879.4,497.9 874.2,499.9 868.8,501.7 863.3,503.2 857.8,504.4 761.8,522.1 758.8,522.6 755.8,522.7 752.7,522.7 749.7,522.4 746.8,521.8 744.0,521.1 741.3,520.1 738.8,518.8 736.4,517.4 734.2,515.8 732.3,514.0 730.6,512.1 729.2,510.0 728.0,507.8 727.1,505.5 726.6,503.1 726.3,500.7" fill="#7c7c7c"/>
<polygon points="721.7,452.2 722.0,454.6 726.6,503.1 726.3,500.7" fill="#4c4c4c" stroke="#4c4c4c" stroke-width="0.6"/>
<polygon points="722.0,454.6 722.5,456.9 727.1,505.5 726.6,503.1" fill="#4c4c4c" stroke="#4c4c4c" stroke-width="0.6"/>
<polygon points="722.5,456.9 723.4,459.2 728.0,507.8 727.1,505.5" fill="#4c4c4c" stroke="#4c4c4c" stroke-width="0.6"/>
<polygon points="723.4,459.2 724.6,461.4 729.2,510.0 728.0,507.8" fill="#4c4c4c" stroke="#4c4c4c" stroke-width="0.6"/>
<polygon points="724.6,461.4 726.0,463.5 730.6,512.1 729.2,510.0" fill="#4d4d4d" stroke="#4d4d4d" stroke-width="0.6"/>
<polygon points="726.0,463.5 727.7,465.4 732.3,514.0 730.6,512.1" fill="#505050" stroke="#505050" stroke-width="0.6"/>
<polygon points="727.7,465.4 729.6,467.2 734.2,515.8 732.3,514.0" fill="#535353" stroke="#535353" stroke-width="0.6"/>
<polygon points="729.6,467.2 731.8,468.8 736.4,517.4 734.2,515.8" fill="#585858" stroke="#585858" stroke-width="0.6"/>
<polygon points="731.8,468.8 734.2,470.3 738.8,518.8 736.4,517.4" fill="#5e5e5e" stroke="#5e5e5e" stroke-width="0.6"/>
<polygon points="734.2,470.3 736.7,471.5 741.3,520.1 738.8,518.8" fill="#646464" stroke="#646464" stroke-width="0.6"/>
<polygon points="736.7,471.5 739.4,472.5 744.0,521.1 741.3,520.1" fill="#6a6a6a" stroke="#6a6a6a" stroke-width="0.6"/>
<polygon points="739.4,472.5 742.2,473.3 746.8,521.8 744.0,521.1" fill="#717171" stroke="#717171" stroke-width="0.6"/>
<polygon points="742.2,473.3 745.2,473.8 749.7,522.4 746.8,521.8" fill="#777777" stroke="#777777" stroke-width="0.6"/>
<polygon points="745.2,473.8 748.1,474.1 752.7,522.7 749.7,522.4" fill="#7d7d7d" stroke="#7d7d7d" stroke-width="0.6"/>
<polygon points="748.1,474.1 751.2,474.2 755.8,522.7 752.7,522.7" fill="#828282" stroke="#828282" stroke-width="0.6"/>
<polygon points="751.2,474.2 754.2,474.0 758.8,522.6 755.8,522.7" fill="#868686" stroke="#868686" stroke-width="0.6"/>
<polygon points="754.2,474.0 757.2,473.6 761.8,522.1 758.8,522.6" fill="#898989" stroke="#898989" stroke-width="0.6"/>
<polygon points="757.2,473.6 853.2,455.8 857.8,504.4 761.8,522.1" fill="#8a8a8a" stroke="#8a8a8a" stroke-width="0.6"/>
<polygon points="853.2,455.8 858.8,454.6 863.3,503.2 857.8,504.4" fill="#8b8b8b" stroke="#8b8b8b" stroke-width="0.6"/>
<polygon points="858.8,454.6 864.2,453.1 868.8,501.7 863.3,503.2" fill="#8c8c8c" stroke="#8c8c8c" stroke-width="0.6"/>
<polygon points="864.2,453.1 869.6,451.4 874.2,499.9 868.8,501.7" fill="#8c8c8c" stroke="#8c8c8c" stroke-width="0.6"/>
<polygon points="869.6,451.4 874.8,449.3 879.4,497.9 874.2,499.9" fill="#8b8b8b" stroke="#8b8b8b" stroke-width="0.6"/>
<polygon points="874.8,449.3 879.8,447.0 884.4,495.5 879.4,497.9" fill="#8a8a8a" stroke="#8a8a8a" stroke-width="0.6"/>
<polygon points="879.8,447.0 884.7,444.4 889.3,493.0 884.4,495.5" fill="#898989" stroke="#898989" stroke-width="0.6"/>
<polygon points="884.7,444.4 889.3,441.6 893.9,490.1 889.3,493.0" fill="#878787" stroke="#878787" stroke-width="0.6"/>
<polygon points="889.3,441.6 893.7,438.5 898.3,487.1 893.9,490.1" fill="#848484" stroke="#848484" stroke-width="0.6"/>
<polygon points="893.7,438.5 897.8,435.2 902.4,483.8 898.3,487.1" fill="#818181" stroke="#818181" stroke-width="0.6"/>
<polygon points="897.8,435.2 901.7,431.7 906.3,480.3 902.4,483.8" fill="#7e7e7e" stroke="#7e7e7e" stroke-width="0.6"/>
<polygon points="901.7,431.7 905.3,428.0 909.8,476.6 906.3,480.3" fill="#7a7a7a" stroke="#7a7a7a" stroke-width="0.6"/>
<polygon points="905.3,428.0 908.5,424.1 913.1,472.7 909.8,476.6" fill="#767676" stroke="#767676" stroke-width="0.6"/>
<polygon points="908.5,424.1 911.4,420.1 916.0,468.7 913.1,472.7" fill="#717171" stroke="#717171" stroke-width="0.6"/>
<polygon points="911.4,420.1 914.0,416.0 918.6,464.5 916.0,468.7" fill="#6d6d6d" stroke="#6d6d6d" stroke-width="0.6"/>
<polygon points="914.0,416.0 916.3,411.7 920.8,460.2 918.6,464.5" fill="#696969" stroke="#696969" stroke-width="0.6"/>
<polygon points="916.3,411.7 951.4,337.7 956.0,386.3 920.8,460.2" fill="#676767" stroke="#676767" stroke-width="0.6"/>
<polygon points="951.4,337.7 952.3,335.4 956.9,383.9 956.0,386.3" fill="#636363" stroke="#636363" stroke-width="0.6"/>
<polygon points="952.3,335.4 953.0,333.0 957.6,381.5 956.9,383.9" fill="#5d5d5d" stroke="#5d5d5d" stroke-width="0.6"/>
<polygon points="953.0,333.0 953.3,330.6 957.9,379.1 957.6,381.5" fill="#585858" stroke="#585858" stroke-width="0.6"/>
<polygon points="953.3,330.6 953.4,328.1 958.0,376.7 957.9,379.1" fill="#535353" stroke="#535353" stroke-width="0.6"/>
<path d="M853.2 455.8L857.8 504.4" stroke="#4a4a4a" stroke-width="0.7" stroke-dasharray="2.5 1.2"/>
<polygon points="826.5,373.1 820.9,374.3 815.5,375.7 810.1,377.5 804.9,379.6 799.8,381.9 795.0,384.5 790.4,387.3 786.0,390.4 781.9,393.7 778.0,397.2 774.4,400.9 771.2,404.7 768.3,408.8 765.7,412.9 763.4,417.2 728.3,491.2 727.3,493.5 726.7,495.9 726.3,498.3 726.3,500.7 726.6,503.1 727.1,505.5 728.0,507.8 729.2,510.0 730.6,512.1 732.3,514.0 734.2,515.8 736.4,517.4 738.8,518.8 741.3,520.1 744.0,521.1 746.8,521.8 749.7,522.4 752.7,522.7 755.8,522.7 758.8,522.6 761.8,522.1 857.8,504.4 863.3,503.2 868.8,501.7 874.2,499.9 879.4,497.9 884.4,495.5 889.3,493.0 893.9,490.1 898.3,487.1 902.4,483.8 906.3,480.3 909.8,476.6 913.1,472.7 916.0,468.7 918.6,464.5 920.8,460.2 956.0,386.3 956.9,383.9 957.6,381.5 957.9,379.1 958.0,376.7 957.7,374.3 957.1,372.0 956.3,369.7 955.1,367.5 953.7,365.4 952.0,363.4 950.1,361.6 947.9,360.0 945.5,358.6 943.0,357.4 940.3,356.4 937.5,355.6 934.5,355.1 931.5,354.8 928.5,354.7 925.5,354.9 922.5,355.3" fill="none" stroke="#00f0ff" stroke-width="1.2" stroke-linejoin="round"/>
<path d="M857.8 504.4L859.9 516.8" stroke="#00f0ff" stroke-width="1.2"/>
<clipPath id="bc"><polygon points="888.9,354.2 885.9,351.6 882.6,349.1 879.0,346.8 875.3,344.8 871.4,342.9 867.4,341.3 863.2,339.9 858.8,338.8 854.4,337.9 849.9,337.2 845.3,336.8 840.7,336.7 836.1,336.8 831.5,337.2 826.9,337.8 822.4,338.7 817.9,339.8 813.6,341.1 809.3,342.7 805.2,344.5 801.2,346.5 797.5,348.8 793.9,351.2 790.5,353.8 787.3,356.6 784.4,359.6 781.7,362.7 779.3,365.9 777.2,369.3 775.3,372.7 773.8,376.2 772.5,379.8 771.6,383.5 771.0,387.1 770.7,390.8 770.7,394.5 771.1,398.2 771.7,401.8 772.7,405.4 774.0,408.9 775.5,412.3 777.4,415.6 779.6,418.8 782.0,421.8 784.7,424.7 787.7,427.5 790.9,430.0 794.3,432.4 797.9,434.5 801.7,436.5 805.7,438.2 809.8,439.7 814.1,441.0 818.5,442.0 822.9,442.8 827.5,443.3 832.1,443.6 836.7,443.6 841.3,443.4 845.9,442.9 850.4,442.1 854.9,441.1 859.4,439.9 863.7,438.4 867.8,436.7 871.9,434.8 875.8,432.7 879.5,430.3 883.0,427.8 886.2,425.1 889.3,422.2 892.1,419.2 894.6,416.0 896.9,412.7 898.9,409.3 900.6,405.9 902.0,402.3 903.1,398.7 903.8,395.0 904.3,391.3 904.4,387.6 904.3,384.0 903.8,380.3 902.9,376.7 901.8,373.2 900.4,369.7 898.7,366.4 896.6,363.1 894.3,360.0 891.8,357.0"/></clipPath>
<polygon points="888.9,354.2 885.9,351.6 882.6,349.1 879.0,346.8 875.3,344.8 871.4,342.9 867.4,341.3 863.2,339.9 858.8,338.8 854.4,337.9 849.9,337.2 845.3,336.8 840.7,336.7 836.1,336.8 831.5,337.2 826.9,337.8 822.4,338.7 817.9,339.8 813.6,341.1 809.3,342.7 805.2,344.5 801.2,346.5 797.5,348.8 793.9,351.2 790.5,353.8 787.3,356.6 784.4,359.6 781.7,362.7 779.3,365.9 777.2,369.3 775.3,372.7 773.8,376.2 772.5,379.8 771.6,383.5 771.0,387.1 770.7,390.8 770.7,394.5 771.1,398.2 771.7,401.8 772.7,405.4 774.0,408.9 775.5,412.3 777.4,415.6 779.6,418.8 782.0,421.8 784.7,424.7 787.7,427.5 790.9,430.0 794.3,432.4 797.9,434.5 801.7,436.5 805.7,438.2 809.8,439.7 814.1,441.0 818.5,442.0 822.9,442.8 827.5,443.3 832.1,443.6 836.7,443.6 841.3,443.4 845.9,442.9 850.4,442.1 854.9,441.1 859.4,439.9 863.7,438.4 867.8,436.7 871.9,434.8 875.8,432.7 879.5,430.3 883.0,427.8 886.2,425.1 889.3,422.2 892.1,419.2 894.6,416.0 896.9,412.7 898.9,409.3 900.6,405.9 902.0,402.3 903.1,398.7 903.8,395.0 904.3,391.3 904.4,387.6 904.3,384.0 903.8,380.3 902.9,376.7 901.8,373.2 900.4,369.7 898.7,366.4 896.6,363.1 894.3,360.0 891.8,357.0" fill="url(#gbore)"/>
<g clip-path="url(#bc)"><polygon points="888.9,354.2 897.2,441.8 913.2,441.8 904.9,354.2" fill="url(#gbore2)"/><path d="M888.9 354.2L897.2 441.8" stroke="#2e2e2e" stroke-width="0.9"/></g>
<polygon points="897.2,441.8 894.1,439.2 890.8,436.7 887.3,434.4 883.6,432.4 879.7,430.5 875.6,428.9 871.4,427.5 867.1,426.4 862.7,425.5 858.2,424.8 853.6,424.4 849.0,424.3 844.4,424.4 839.8,424.8 835.2,425.4 830.7,426.3 826.2,427.4 821.9,428.7 817.6,430.3 813.5,432.1 809.5,434.1 805.7,436.4 802.1,438.8 798.7,441.4 795.6,444.2 792.7,447.2 790.0,450.3 787.6,453.5 785.4,456.9 783.6,460.3 782.1,463.8 780.8,467.4 779.9,471.1 779.3,474.7 779.0,478.4 779.0,482.1 779.3,485.8 780.0,489.4 781.0,493.0 782.2,496.5 783.8,499.9 785.7,503.2 787.8,506.4 790.3,509.4 793.0,512.3 795.9,515.1 799.1,517.6 802.6,520.0 806.2,522.1 810.0,524.1 814.0,525.8 818.1,527.3 822.4,528.6 826.7,529.6 831.2,530.4 835.7,530.9 840.3,531.2 844.9,531.2 849.6,531.0 854.2,530.5 858.7,529.7 863.2,528.7 867.6,527.5 871.9,526.0 876.1,524.3 880.2,522.4 884.0,520.3 887.7,517.9 891.2,515.4 894.5,512.7 897.6,509.8 900.4,506.8 902.9,503.6 905.2,500.3 907.2,496.9 908.9,493.5 910.2,489.9 911.3,486.3 912.1,482.6 912.6,478.9 912.7,475.2 912.5,471.6 912.0,467.9 911.2,464.3 910.1,460.8 908.7,457.3 906.9,454.0 904.9,450.7 902.6,447.6 900.0,444.6" fill="#181818" clip-path="url(#bc)"/>
<polygon points="931.9,324.2 930.6,323.1 929.1,322.3 927.4,321.7 925.6,321.4 923.8,321.3 921.9,321.4 920.1,321.8 918.4,322.5 916.8,323.3 915.4,324.4 914.3,325.6 913.4,326.9 912.8,328.3 912.5,329.8 912.5,331.3 912.9,332.8 913.5,334.1 914.4,335.4 915.6,336.5 917.1,337.4 918.7,338.1 920.4,338.6 922.2,338.8 924.1,338.8 925.9,338.5 927.7,338.0 929.4,337.2 930.8,336.3 932.1,335.2 933.1,333.9 933.9,332.5 934.3,331.0 934.4,329.5 934.2,328.1 933.7,326.7 933.0,325.3" fill="url(#gsm)"/>
<polygon points="760.1,444.4 758.8,443.3 757.3,442.5 755.6,441.9 753.8,441.6 751.9,441.5 750.1,441.6 748.3,442.0 746.6,442.7 745.0,443.5 743.6,444.6 742.5,445.8 741.6,447.1 741.0,448.5 740.7,450.0 740.7,451.5 741.1,453.0 741.7,454.3 742.6,455.6 743.8,456.7 745.3,457.6 746.9,458.3 748.6,458.8 750.4,459.0 752.3,459.0 754.1,458.7 755.9,458.2 757.5,457.4 759.0,456.5 760.3,455.4 761.3,454.1 762.1,452.7 762.5,451.2 762.6,449.7 762.4,448.3 761.9,446.9 761.1,445.5" fill="#3a3a3a"/>
<path d="M821.9 324.5L816.3 325.7L810.9 327.2L805.5 328.9L800.3 331.0L795.3 333.3L790.4 335.9L785.8 338.8L781.4 341.8L777.3 345.1L773.4 348.6L769.8 352.3L766.6 356.2L763.7 360.2L761.1 364.4L758.8 368.6L723.7 442.6L722.8 444.9L722.1 447.3L721.8 449.7L721.7 452.2L722.0 454.6L722.5 456.9L723.4 459.2L724.6 461.4L726.0 463.5L727.7 465.4L729.6 467.2L731.8 468.8L734.2 470.3L736.7 471.5L739.4 472.5L742.2 473.3L745.2 473.8L748.1 474.1L751.2 474.2L754.2 474.0L757.2 473.6L853.2 455.8L858.8 454.6L864.2 453.1L869.6 451.4L874.8 449.3L879.8 447.0L884.7 444.4L889.3 441.6L893.7 438.5L897.8 435.2L901.7 431.7L905.3 428.0L908.5 424.1L911.4 420.1L914.0 416.0L916.3 411.7L951.4 337.7L952.3 335.4L953.0 333.0L953.3 330.6L953.4 328.1L953.1 325.7L952.5 323.4L951.7 321.1L950.5 318.9L949.1 316.8L947.4 314.9L945.5 313.1L943.3 311.5L940.9 310.0L938.4 308.8L935.7 307.8L932.9 307.0L929.9 306.5L927.0 306.2L923.9 306.1L920.9 306.3L917.9 306.7Z M888.9 354.2L885.9 351.6L882.6 349.1L879.0 346.8L875.3 344.8L871.4 342.9L867.4 341.3L863.2 339.9L858.8 338.8L854.4 337.9L849.9 337.2L845.3 336.8L840.7 336.7L836.1 336.8L831.5 337.2L826.9 337.8L822.4 338.7L817.9 339.8L813.6 341.1L809.3 342.7L805.2 344.5L801.2 346.5L797.5 348.8L793.9 351.2L790.5 353.8L787.3 356.6L784.4 359.6L781.7 362.7L779.3 365.9L777.2 369.3L775.3 372.7L773.8 376.2L772.5 379.8L771.6 383.5L771.0 387.1L770.7 390.8L770.7 394.5L771.1 398.2L771.7 401.8L772.7 405.4L774.0 408.9L775.5 412.3L777.4 415.6L779.6 418.8L782.0 421.8L784.7 424.7L787.7 427.5L790.9 430.0L794.3 432.4L797.9 434.5L801.7 436.5L805.7 438.2L809.8 439.7L814.1 441.0L818.5 442.0L822.9 442.8L827.5 443.3L832.1 443.6L836.7 443.6L841.3 443.4L845.9 442.9L850.4 442.1L854.9 441.1L859.4 439.9L863.7 438.4L867.8 436.7L871.9 434.8L875.8 432.7L879.5 430.3L883.0 427.8L886.2 425.1L889.3 422.2L892.1 419.2L894.6 416.0L896.9 412.7L898.9 409.3L900.6 405.9L902.0 402.3L903.1 398.7L903.8 395.0L904.3 391.3L904.4 387.6L904.3 384.0L903.8 380.3L902.9 376.7L901.8 373.2L900.4 369.7L898.7 366.4L896.6 363.1L894.3 360.0L891.8 357.0Z M931.9 324.2L930.6 323.1L929.1 322.3L927.4 321.7L925.6 321.4L923.8 321.3L921.9 321.4L920.1 321.8L918.4 322.5L916.8 323.3L915.4 324.4L914.3 325.6L913.4 326.9L912.8 328.3L912.5 329.8L912.5 331.3L912.9 332.8L913.5 334.1L914.4 335.4L915.6 336.5L917.1 337.4L918.7 338.1L920.4 338.6L922.2 338.8L924.1 338.8L925.9 338.5L927.7 338.0L929.4 337.2L930.8 336.3L932.1 335.2L933.1 333.9L933.9 332.5L934.3 331.0L934.4 329.5L934.2 328.1L933.7 326.7L933.0 325.3Z M760.1 444.4L758.8 443.3L757.3 442.5L755.6 441.9L753.8 441.6L751.9 441.5L750.1 441.6L748.3 442.0L746.6 442.7L745.0 443.5L743.6 444.6L742.5 445.8L741.6 447.1L741.0 448.5L740.7 450.0L740.7 451.5L741.1 453.0L741.7 454.3L742.6 455.6L743.8 456.7L745.3 457.6L746.9 458.3L748.6 458.8L750.4 459.0L752.3 459.0L754.1 458.7L755.9 458.2L757.5 457.4L759.0 456.5L760.3 455.4L761.3 454.1L762.1 452.7L762.5 451.2L762.6 449.7L762.4 448.3L761.9 446.9L761.1 445.5Z" fill="#00a9ff" fill-rule="evenodd" stroke="#00f0ff" stroke-width="2.3" stroke-linejoin="round"/>
<polygon points="826.5,373.1 820.9,374.3 815.5,375.7 810.1,377.5 804.9,379.6 799.8,381.9 795.0,384.5 790.4,387.3 786.0,390.4 781.9,393.7 778.0,397.2 774.4,400.9 771.2,404.7 768.3,408.8 765.7,412.9 763.4,417.2 728.3,491.2 727.3,493.5 726.7,495.9 726.3,498.3 726.3,500.7 726.6,503.1 727.1,505.5 728.0,507.8 729.2,510.0 730.6,512.1 732.3,514.0 734.2,515.8 736.4,517.4 738.8,518.8 741.3,520.1 744.0,521.1 746.8,521.8 749.7,522.4 752.7,522.7 755.8,522.7 758.8,522.6 761.8,522.1 857.8,504.4 863.3,503.2 868.8,501.7 874.2,499.9 879.4,497.9 884.4,495.5 889.3,493.0 893.9,490.1 898.3,487.1 902.4,483.8 906.3,480.3 909.8,476.6 913.1,472.7 916.0,468.7 918.6,464.5 920.8,460.2 956.0,386.3 956.9,383.9 957.6,381.5 957.9,379.1 958.0,376.7 957.7,374.3 957.1,372.0 956.3,369.7 955.1,367.5 953.7,365.4 952.0,363.4 950.1,361.6 947.9,360.0 945.5,358.6 943.0,357.4 940.3,356.4 937.5,355.6 934.5,355.1 931.5,354.8 928.5,354.7 925.5,354.9 922.5,355.3" fill="none" stroke="#00f0ff" stroke-width="1.6" stroke-linejoin="round"/>
<polygon points="825.4,371.5 819.2,372.8 813.1,374.5 807.2,376.4 801.4,378.7 795.9,381.3 790.5,384.1 785.4,387.3 780.5,390.7 775.9,394.3 771.7,398.2 767.7,402.3 764.1,406.5 760.9,411.0 758.0,415.6 755.6,420.3 720.4,494.3 719.2,497.3 718.3,500.4 717.9,503.6 717.8,506.7 718.2,509.9 718.9,512.9 720.0,515.9 721.5,518.7 723.4,521.5 725.6,524.0 728.1,526.3 730.9,528.4 734.0,530.3 737.3,531.9 740.8,533.2 744.5,534.2 748.3,534.9 752.2,535.3 756.1,535.4 760.1,535.1 764.0,534.6 859.9,516.8 866.1,515.5 872.2,513.8 878.1,511.9 883.9,509.6 889.4,507.0 894.8,504.2 899.9,501.0 904.8,497.6 909.4,494.0 913.6,490.1 917.6,486.0 921.2,481.8 924.4,477.3 927.3,472.7 929.7,468.0 964.9,394.0 966.1,391.0 967.0,387.9 967.4,384.7 967.5,381.6 967.1,378.4 966.4,375.4 965.3,372.4 963.8,369.6 961.9,366.8 959.7,364.3 957.2,362.0 954.4,359.9 951.3,358.0 948.0,356.4 944.5,355.1 940.8,354.1 937.0,353.4 933.1,353.0 929.2,352.9 925.2,353.2 921.3,353.7" fill="none" stroke="#00f0ff" stroke-width="1.6" stroke-linejoin="round"/>
<polygon points="940.2,411.8 938.9,410.7 937.3,409.9 935.7,409.3 933.9,409.0 932.0,408.9 930.2,409.0 928.4,409.4 926.6,410.1 925.1,410.9 923.7,412.0 922.5,413.2 921.7,414.5 921.1,415.9 920.8,417.4 920.8,418.9 921.1,420.4 921.8,421.7 922.7,423.0 923.9,424.1 925.3,425.0 926.9,425.7 928.7,426.2 930.5,426.4 932.4,426.4 934.2,426.1 936.0,425.6 937.6,424.8 939.1,423.9 940.4,422.8 941.4,421.5 942.1,420.1 942.6,418.6 942.7,417.1 942.5,415.7 942.0,414.3 941.2,412.9" fill="none" stroke="#00f0ff" stroke-width="1.4"/>
<path d="M934.1 331.1L942.3 418.7" stroke="#00f0ff" stroke-width="1.4"/>
<rect x="750.4" y="449.9" width="2.4" height="2.4" fill="#f4f4f4"/>
<path d="M837.5 390.2L936.6 319.6" stroke="#e8e8e8" stroke-width="1"/>
<polygon points="951.5,309.9 938.1,321.9 935.1,317.3" fill="#e0303a"/>
<path d="M837.5 390.2L755.1 314.1" stroke="#e8e8e8" stroke-width="1"/>
<polygon points="742.1,302.4 756.9,312.1 753.3,316.1" fill="#10b050"/>
<path d="M837.5 390.2L830.5 312.8" stroke="#e8e8e8" stroke-width="1"/>
<polygon points="829.2,300.3 833.2,312.5 827.8,313.1" fill="#5878e8"/>
</svg>
<!-- BOTTOM BAR -->
<svg class="abs" style="left:0;top:0" width="1163" height="769" viewBox="0 0 1163 769" font-family="Liberation Sans, sans-serif">
<polygon points="528.4,703.3 567.7,675.7 534.9,645.4 495.6,673.0" fill="#353535" stroke="#262626" stroke-width="0.8" stroke-linejoin="round"/>
<polygon points="531.3,734.2 570.6,706.7 567.7,675.7 528.4,703.3" fill="#2d2d2d" stroke="#262626" stroke-width="0.8" stroke-linejoin="round"/>
<polygon points="531.3,734.2 528.4,703.3 495.6,673.0 498.5,703.9" fill="#303030" stroke="#262626" stroke-width="0.8" stroke-linejoin="round"/>
<path d="M531.3 734.2L577.4 702.2" stroke="#e0104c" stroke-width="1.9"/>
<path d="M531.3 734.2L493.4 699" stroke="#17a87a" stroke-width="1.9"/>
<path d="M531.3 734.2L528.4 698.4" stroke="#2350e0" stroke-width="1.9"/>
<text transform="matrix(0.7670 -0.5366 0.6389 0.5905 531.7 673.7)" font-size="12.5" font-weight="normal" letter-spacing="0" fill="#f4f4f4" text-anchor="middle" y="4.5">Top</text>
<text transform="matrix(0.7670 -0.5366 0.0570 0.6033 550.0 705.4)" font-size="12.5" font-weight="normal" letter-spacing="0" fill="#f4f4f4" text-anchor="middle" y="4.5">Front</text>
<text transform="matrix(0.6389 0.5905 0.0570 0.6033 513.5 703.0)" font-size="12" font-weight="normal" letter-spacing="0" fill="#f4f4f4" text-anchor="middle" y="4.32">Left</text>
<text x="527.600" y="694.300" font-size="12.500" fill="#1f5cf0" text-anchor="middle">Z</text>
<text x="485.300" y="695.300" font-size="12.500" fill="#14b482" text-anchor="middle">Y</text>
<text x="587.400" y="699.400" font-size="12.500" fill="#d81050" text-anchor="middle">X</text>
<g fill="none" stroke="#12f0c6" stroke-width="2.300"><path d="M588 741V737H592M598.200 737H602.200V741M602.200 747V751H598.200M592 751H588V747"/></g>
<rect x="590.900" y="739.900" width="8.400" height="8.400" fill="#fff"/>
<defs><radialGradient id="sph" cx="0.42" cy="0.28" r="0.75"><stop offset="0" stop-color="#ffffff"/><stop offset="0.45" stop-color="#d2d2d2"/><stop offset="1" stop-color="#707070"/></radialGradient>
<linearGradient id="cyl2" x1="0" x2="0" y1="0" y2="1"><stop offset="0" stop-color="#6c6c6c"/><stop offset="0.45" stop-color="#d8d8d8"/><stop offset="0.8" stop-color="#f4f4f4"/><stop offset="1" stop-color="#8a8a8a"/></linearGradient></defs>
<circle cx="623.200" cy="743.900" r="8.600" fill="url(#sph)" stroke="#1a1a1a" stroke-width="0.800"/>
<path d="M614.700 744.800Q623.500 747.600 631.700 744.600M624.600 735.400Q626.800 744 624.200 752.400" fill="none" stroke="#161616" stroke-width="1"/>
<path d="M646 735H652.500V753H646A3.600 9 0 0 1 646 735Z" fill="url(#cyl2)"/>
<ellipse cx="652.500" cy="744" rx="3.400" ry="9" fill="#fdfdfd"/>
<ellipse cx="652.800" cy="744" rx="2" ry="5.600" fill="#8c8c8c"/>
<path d="M652.800 739.600H658.200V748.400H652.800Z" fill="url(#cyl2)"/>
<ellipse cx="658.200" cy="744" rx="1.700" ry="4.500" fill="#fdfdfd"/>
</svg>
<div class="btn" style="left:865px;top:729px;width:30px;height:30px"></div>
<div class="btn" style="left:896px;top:729px;width:30px;height:30px"></div>
<div class="btn" style="left:932px;top:729px;width:120px;height:30px"></div>
<div class="btn" style="left:1058px;top:729px;width:30px;height:30px"></div>
<svg class="abs" style="left:865px;top:729px" width="230" height="30" viewBox="865 729 230 30" fill="none">
<path d="M880.100 738V750M874.100 744H886.100" stroke="#bdbdbd" stroke-width="1.500"/>
<path d="M906.600 742.200L911.100 746.700L915.600 742.200" stroke="#a8a8a8" stroke-width="1.300"/>
<path d="M947 737.600V744.400M947 744.400L939.600 749.800M947 744.400L954.400 749.800" stroke="#a8a8a8" stroke-width="1"/>
<path d="M947 740.200L950.800 742.300V746.600L947 748.800L943.200 746.600V742.300Z" fill="#14a582"/>
<path d="M947 744.400V748.800M947 744.400L943.200 742.300M947 744.400L950.800 742.300" stroke="#0c6e58" stroke-width="0.700"/>
<circle cx="947" cy="737.600" r="0.900" fill="#c8c8c8"/><circle cx="939.600" cy="749.800" r="0.900" fill="#c8c8c8"/><circle cx="954.400" cy="749.800" r="0.900" fill="#c8c8c8"/>
<path d="M1066 749.300H1079.900M1067.800 749V743.300A5.150 6.400 0 0 1 1078.100 743.300V749M1070 751.800H1076" stroke="#b4b4b4" stroke-width="1.300"/>
</svg>
<div class="t" id="tcs" style="left:964px;top:736.7px;font-size:13px;letter-spacing:-0.55px">Global CS</div>
<div class="t" id="tpct" style="left:1105.500px;top:737.7px;font-size:13px">1%</div>
<div class="abs" style="left:1138px;top:730px;width:10.500px;height:29px;border:1.700px solid #1d8f8a;background:#1b2a2a;border-radius:1px"></div>
</div>
</body></html>
